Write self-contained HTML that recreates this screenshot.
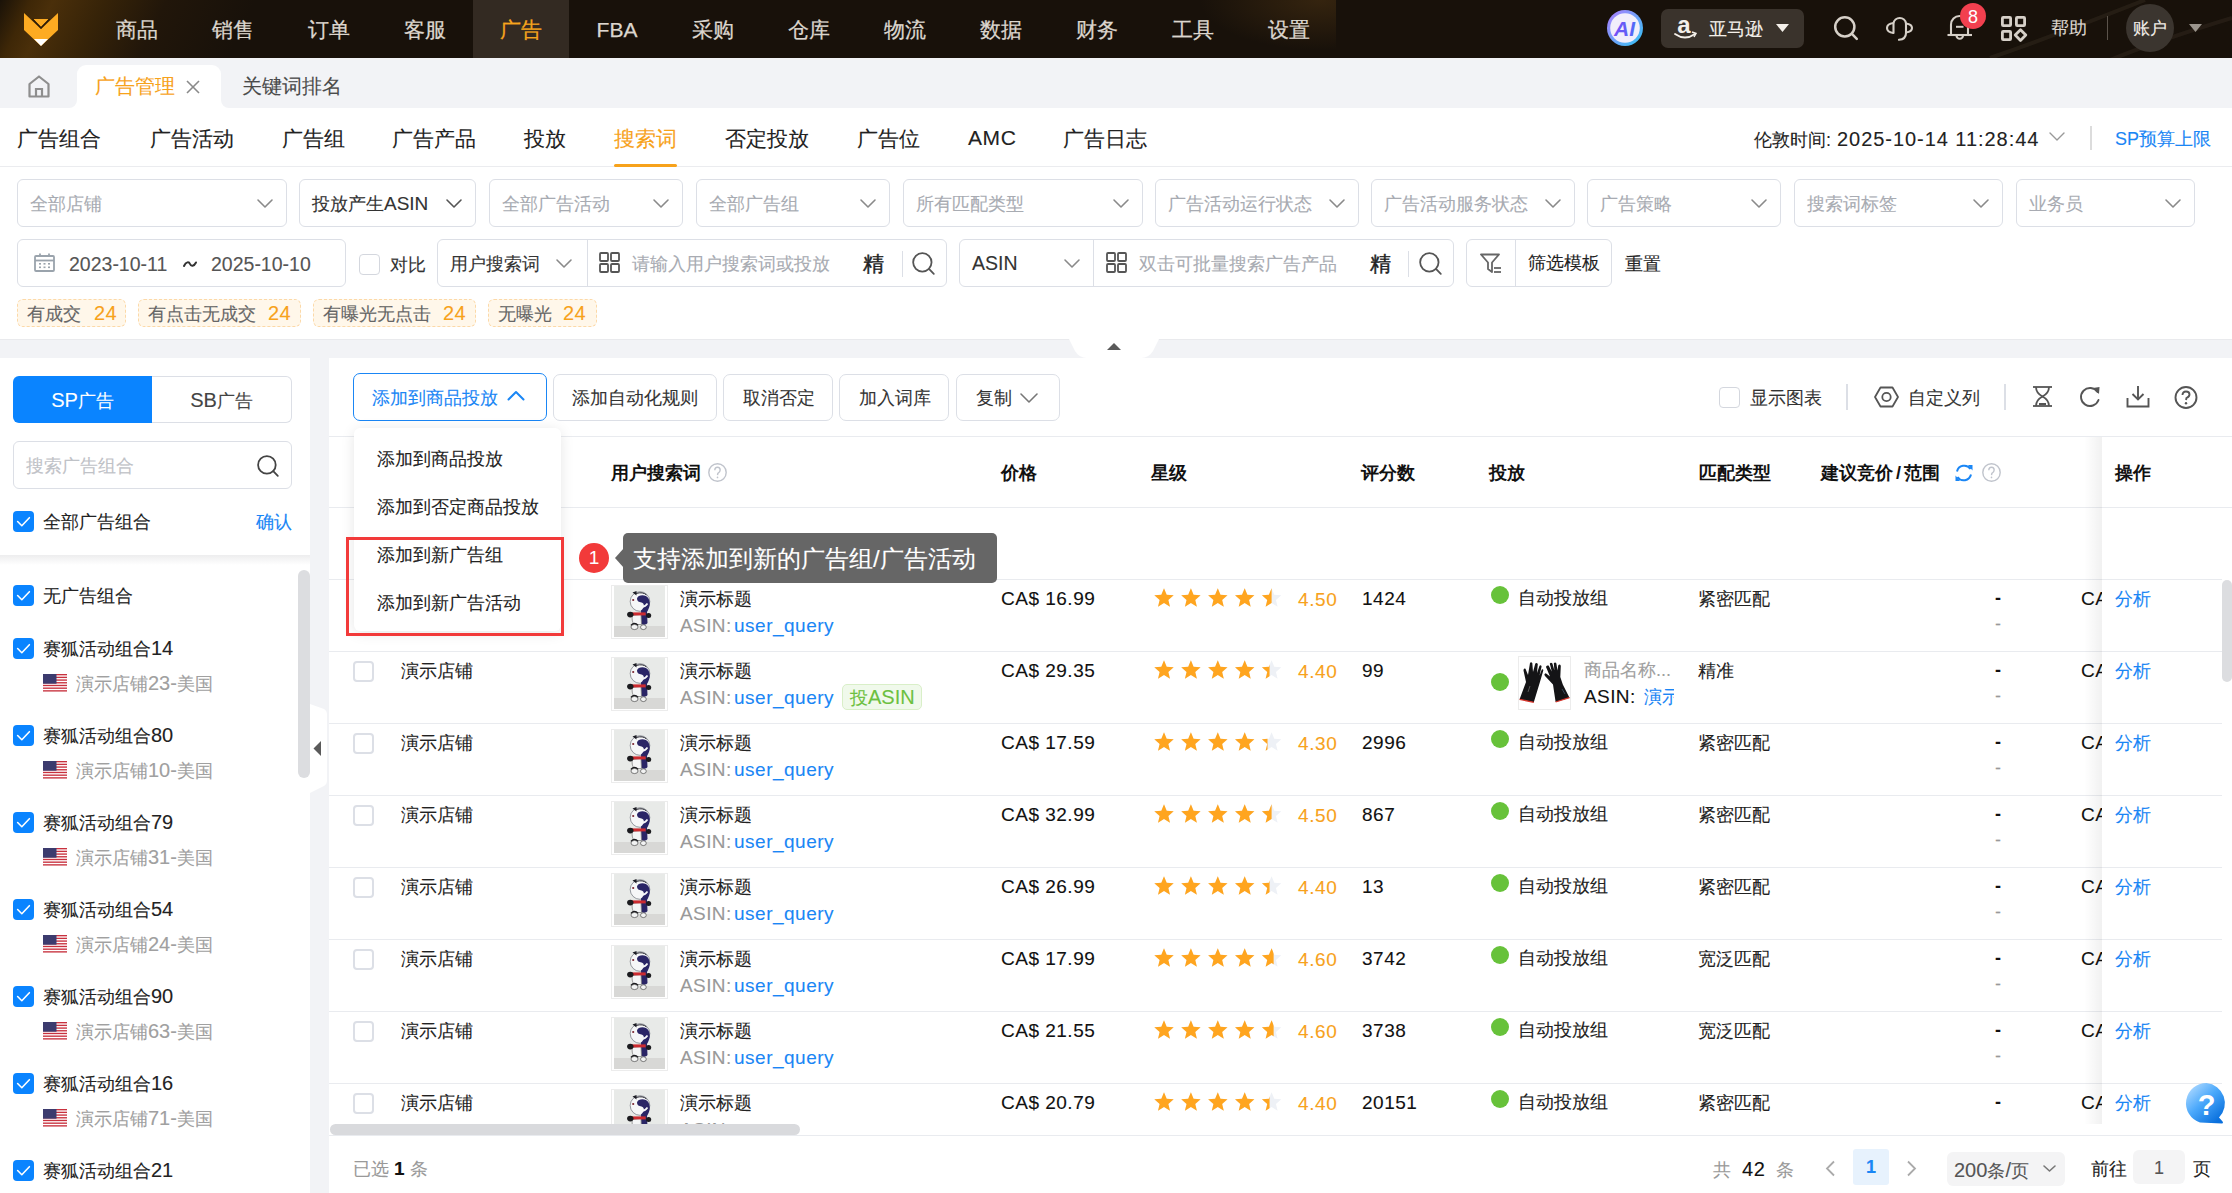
<!DOCTYPE html><html><head><meta charset="utf-8"><style>
html,body{margin:0;padding:0}
body{width:2232px;height:1193px;overflow:hidden;position:relative;background:#fff;font-family:"Liberation Sans",sans-serif;}
.t{position:absolute;white-space:nowrap;-webkit-text-stroke:0.1px currentColor}
.b{position:absolute;box-sizing:content-box}
svg.b{overflow:visible}
</style></head><body>
<div class="b" style="left:0;top:0;width:2232px;height:58px;background:#18110a"></div>
<div class="b" style="left:0;top:0;width:300px;height:58px;background:linear-gradient(116deg,#1a1208 0px,#3e2707 28px,#4a2f0a 48px,#362308 95px,#21160a 150px,#18110a 230px)"></div>
<div class="b" style="left:1150px;top:0;width:186px;height:58px;background:radial-gradient(ellipse 120px 50px at 170px 0px,#35240f 0%,rgba(21,14,8,0) 100%)"></div>
<svg class="b" style="left:1960px;top:0px;overflow:hidden" width="272" height="58" viewBox="0 0 272 58"><path d="M30,58 Q110,30 185,0" fill="none" stroke="rgba(130,115,95,0.13)" stroke-width="4"/><path d="M150,60 Q200,40 272,18" fill="none" stroke="rgba(130,115,95,0.12)" stroke-width="4"/></svg>
<div class="b" style="left:473px;top:0px;width:96px;height:58px;background:#332a22"></div>
<svg class="b" style="left:24px;top:13px;" width="34" height="33" viewBox="0 0 34 33"><polygon points="0,0 17,16 34,0 34,17 17,33 0,17" fill="#fdab22"/><polygon points="9,6 25,6 17,14" fill="#fdab22"/><polyline points="8.5,6 17,15 25.5,6" fill="none" stroke="#2d1c07" stroke-width="1.3"/><polygon points="10,26 24,26 17,33" fill="#fff"/></svg>
<div class="t" style="left:89px;top:18.5px;width:96px;text-align:center;font-size:21px;line-height:21px;color:#dcd6ce;-webkit-text-stroke:0.25px #dcd6ce">商品</div>
<div class="t" style="left:185px;top:18.5px;width:96px;text-align:center;font-size:21px;line-height:21px;color:#dcd6ce;-webkit-text-stroke:0.25px #dcd6ce">销售</div>
<div class="t" style="left:281px;top:18.5px;width:96px;text-align:center;font-size:21px;line-height:21px;color:#dcd6ce;-webkit-text-stroke:0.25px #dcd6ce">订单</div>
<div class="t" style="left:377px;top:18.5px;width:96px;text-align:center;font-size:21px;line-height:21px;color:#dcd6ce;-webkit-text-stroke:0.25px #dcd6ce">客服</div>
<div class="t" style="left:473px;top:18.5px;width:96px;text-align:center;font-size:21px;line-height:21px;color:#f7a51d;-webkit-text-stroke:0.25px #f7a51d">广告</div>
<div class="t" style="left:569px;top:18.5px;width:96px;text-align:center;font-size:21px;line-height:21px;color:#dcd6ce;-webkit-text-stroke:0.25px #dcd6ce">FBA</div>
<div class="t" style="left:665px;top:18.5px;width:96px;text-align:center;font-size:21px;line-height:21px;color:#dcd6ce;-webkit-text-stroke:0.25px #dcd6ce">采购</div>
<div class="t" style="left:761px;top:18.5px;width:96px;text-align:center;font-size:21px;line-height:21px;color:#dcd6ce;-webkit-text-stroke:0.25px #dcd6ce">仓库</div>
<div class="t" style="left:857px;top:18.5px;width:96px;text-align:center;font-size:21px;line-height:21px;color:#dcd6ce;-webkit-text-stroke:0.25px #dcd6ce">物流</div>
<div class="t" style="left:953px;top:18.5px;width:96px;text-align:center;font-size:21px;line-height:21px;color:#dcd6ce;-webkit-text-stroke:0.25px #dcd6ce">数据</div>
<div class="t" style="left:1049px;top:18.5px;width:96px;text-align:center;font-size:21px;line-height:21px;color:#dcd6ce;-webkit-text-stroke:0.25px #dcd6ce">财务</div>
<div class="t" style="left:1145px;top:18.5px;width:96px;text-align:center;font-size:21px;line-height:21px;color:#dcd6ce;-webkit-text-stroke:0.25px #dcd6ce">工具</div>
<div class="t" style="left:1241px;top:18.5px;width:96px;text-align:center;font-size:21px;line-height:21px;color:#dcd6ce;-webkit-text-stroke:0.25px #dcd6ce">设置</div>
<svg class="b" style="left:1607px;top:10px;" width="36" height="36" viewBox="0 0 36 36"><defs><linearGradient id="aig" x1="0" y1="0" x2="1" y2="1"><stop offset="0" stop-color="#b07cff"/><stop offset="1" stop-color="#2fc4f2"/></linearGradient><linearGradient id="ait" x1="0" y1="0" x2="1" y2="0"><stop offset="0" stop-color="#7a4df5"/><stop offset="1" stop-color="#4f6cf7"/></linearGradient></defs><circle cx="18" cy="18" r="18" fill="url(#aig)"/><circle cx="18" cy="18" r="14.8" fill="#f1eefb"/><text x="17.5" y="25.5" text-anchor="middle" font-family="Liberation Sans" font-weight="bold" font-style="italic" font-size="21" fill="url(#ait)">AI</text></svg>
<div class="b" style="left:1661px;top:9px;width:143px;height:39px;background:#3a332c;border-radius:7px"></div>
<svg class="b" style="left:1673px;top:14px;" width="26" height="28" viewBox="0 0 26 28"><text x="11" y="19" text-anchor="middle" font-family="Liberation Sans" font-weight="bold" font-size="24" fill="#f4f0ea">a</text><path d="M2,20 Q12,27 22,20" fill="none" stroke="#f4f0ea" stroke-width="1.8" stroke-linecap="round"/><path d="M19,18 L23,19.5 L21,23" fill="none" stroke="#f4f0ea" stroke-width="1.5"/></svg>
<div class="t" style="left:1709px;top:20px;font-size:18px;line-height:18px;color:#f4f0ea;">亚马逊</div>
<svg class="b" style="left:1776px;top:24px;" width="13" height="9" viewBox="0 0 13 9"><polygon points="0,0 13,0 6.5,8" fill="#f4f0ea"/></svg>
<svg class="b" style="left:1834px;top:16px;" width="24" height="24" viewBox="0 0 24 24"><circle cx="10.8" cy="10.8" r="9.600000000000001" fill="none" stroke="#d6d0c8" stroke-width="2.5"/><line x1="17.712000000000003" y1="17.712000000000003" x2="22.8" y2="22.8" stroke="#d6d0c8" stroke-width="2.5" stroke-linecap="round"/></svg>
<svg class="b" style="left:1886px;top:16px;" width="27" height="25" viewBox="0 0 27 25"><path d="M7.5,17 L7.5,7.5 A6.3,6.3 0 0 1 20,7.5 L20,17 C20,21.5 17,23.5 13,23.8" fill="none" stroke="#d6d0c8" stroke-width="2.1" stroke-linecap="round"/><path d="M7.5,7 C3,7.5 1,9.5 1,12 C1,14.5 3,16.5 7.5,17" fill="none" stroke="#d6d0c8" stroke-width="2.1"/><path d="M20,7.5 C24,8 26,10 26,12 C26,14 24,16 20,16.5" fill="none" stroke="#d6d0c8" stroke-width="2.1"/></svg>
<svg class="b" style="left:1947px;top:16px;" width="26" height="25" viewBox="0 0 26 25"><path d="M4,19 L4,8.5 A8.5,8.5 0 0 1 21,8.5 L21,19" fill="none" stroke="#d6d0c8" stroke-width="2.1"/><line x1="0.5" y1="19" x2="25" y2="19" stroke="#d6d0c8" stroke-width="2.1"/><path d="M9.5,19.5 A3.2,3.2 0 0 0 16,19.5" fill="none" stroke="#d6d0c8" stroke-width="2.1"/><line x1="9" y1="10.8" x2="16.5" y2="10.8" stroke="#d6d0c8" stroke-width="2"/></svg>
<div class="b" style="left:1960px;top:3px;width:26px;height:26px;border-radius:13px;background:#f2404f;color:#fff;font-size:18px;line-height:28px;text-align:center">8</div>
<svg class="b" style="left:2001px;top:16px;" width="26" height="25" viewBox="0 0 26 25"><rect x="1.4" y="1.4" width="8.2" height="8.2" rx="0.8" fill="none" stroke="#d6d0c8" stroke-width="2.8"/><rect x="15.4" y="1.4" width="8.2" height="8.2" rx="0.8" fill="none" stroke="#d6d0c8" stroke-width="2.8"/><rect x="1.4" y="15.4" width="8.2" height="8.2" rx="0.8" fill="none" stroke="#d6d0c8" stroke-width="2.8"/><polygon points="19.5,13.8 24.8,19.1 19.5,24.4 14.2,19.1" fill="none" stroke="#d6d0c8" stroke-width="2.8" stroke-linejoin="round"/></svg>
<div class="t" style="left:2051px;top:19px;font-size:18px;line-height:18px;color:#dcd6ce;">帮助</div>
<div class="b" style="left:2107px;top:16px;width:1px;height:24px;background:#5b534b"></div>
<div class="b" style="left:2126px;top:4px;width:48px;height:48px;border-radius:24px;background:#3b352f"></div>
<div class="t" style="left:2126px;top:20px;width:48px;text-align:center;font-size:16.5px;line-height:17px;color:#f4f0ea">账户</div>
<svg class="b" style="left:2189px;top:24px;" width="13" height="9" viewBox="0 0 13 9"><polygon points="0,0 13,0 6.5,8" fill="#9a948c"/></svg>
<div class="b" style="left:0px;top:58px;width:2232px;height:50px;background:#f2f3f6"></div>
<div class="b" style="left:77px;top:65px;width:144px;height:43px;background:#fff;border-radius:9px 9px 0 0"></div>
<div class="b" style="left:69px;top:100px;width:8px;height:8px;background:#fff"></div>
<div class="b" style="left:69px;top:100px;width:8px;height:8px;background:#f2f3f6;border-radius:0 0 8px 0"></div>
<div class="b" style="left:221px;top:100px;width:8px;height:8px;background:#fff"></div>
<div class="b" style="left:221px;top:100px;width:8px;height:8px;background:#f2f3f6;border-radius:0 0 0 8px"></div>
<svg class="b" style="left:28px;top:75px;" width="22" height="23" viewBox="0 0 22 23"><path d="M1.5,21.5 L1.5,9 L11,1.5 L20.5,9 L20.5,21.5 Z" fill="none" stroke="#8e8e8e" stroke-width="2.2" stroke-linejoin="round"/><path d="M8,21.5 L8,14 L14,14 L14,21.5" fill="none" stroke="#8e8e8e" stroke-width="2.2"/></svg>
<div class="t" style="left:95px;top:77px;font-size:19.5px;line-height:19.5px;color:#f7a21b;">广告管理</div>
<svg class="b" style="left:186px;top:80px;" width="14" height="14" viewBox="0 0 14 14"><line x1="1" y1="1" x2="13" y2="13" stroke="#8a8a8a" stroke-width="1.6"/><line x1="13" y1="1" x2="1" y2="13" stroke="#8a8a8a" stroke-width="1.6"/></svg>
<div class="t" style="left:242px;top:77px;font-size:19.5px;line-height:19.5px;color:#4a4a4a;">关键词排名</div>
<div class="b" style="left:0px;top:166px;width:2232px;height:1px;background:#ebecef"></div>
<div class="t" style="left:17px;top:128px;font-size:21px;line-height:21px;color:#222;">广告组合</div>
<div class="t" style="left:150px;top:128px;font-size:21px;line-height:21px;color:#222;">广告活动</div>
<div class="t" style="left:282px;top:128px;font-size:21px;line-height:21px;color:#222;">广告组</div>
<div class="t" style="left:392px;top:128px;font-size:21px;line-height:21px;color:#222;">广告产品</div>
<div class="t" style="left:524px;top:128px;font-size:21px;line-height:21px;color:#222;">投放</div>
<div class="t" style="left:614px;top:128px;font-size:21px;line-height:21px;color:#f7a21b;">搜索词</div>
<div class="t" style="left:725px;top:128px;font-size:21px;line-height:21px;color:#222;">否定投放</div>
<div class="t" style="left:857px;top:128px;font-size:21px;line-height:21px;color:#222;">广告位</div>
<div class="t" style="left:968px;top:127px;font-size:21px;line-height:21px;color:#222;letter-spacing:0.6px;">AMC</div>
<div class="t" style="left:1063px;top:128px;font-size:21px;line-height:21px;color:#222;">广告日志</div>
<div class="b" style="left:614px;top:164px;width:63px;height:3px;background:#f7a21b;border-radius:2px"></div>
<div class="t" style="left:1754px;top:130px;font-size:18px;line-height:18px;color:#222;">伦敦时间<span style="margin-right:6px">:</span><span style="font-size:20px;letter-spacing:0.95px">2025-10-14 11:28:44</span></div>
<svg class="b" style="left:2049px;top:132px;" width="16" height="10" viewBox="0 0 16 10"><polyline points="1,1 8.0,8 15,1" fill="none" stroke="#999" stroke-width="1.4" stroke-linecap="round" stroke-linejoin="round"/></svg>
<div class="b" style="left:2090px;top:126px;width:2px;height:24px;background:#dcdcdc"></div>
<div class="t" style="left:2115px;top:130px;font-size:18px;line-height:18px;color:#1a86f5;"><span style="font-size:18px;letter-spacing:0px">SP</span>预算上限</div>
<div class="b" style="left:17px;top:179px;width:268px;height:46px;border:1px solid #dcdfe6;border-radius:6px;background:#fff"></div>
<div class="t" style="left:30px;top:195px;font-size:18px;line-height:18px;color:#a8abb2;">全部店铺</div>
<svg class="b" style="left:257px;top:199px;" width="16" height="10" viewBox="0 0 16 10"><polyline points="1,1 8.0,8 15,1" fill="none" stroke="#8a8a8a" stroke-width="1.6" stroke-linecap="round" stroke-linejoin="round"/></svg>
<div class="b" style="left:299px;top:179px;width:175px;height:46px;border:1px solid #dcdfe6;border-radius:6px;background:#fff"></div>
<div class="t" style="left:312px;top:195px;font-size:18px;line-height:18px;color:#333;">投放产生<span style="font-size:19px;letter-spacing:0px">ASIN</span></div>
<svg class="b" style="left:446px;top:199px;" width="16" height="10" viewBox="0 0 16 10"><polyline points="1,1 8.0,8 15,1" fill="none" stroke="#555" stroke-width="1.6" stroke-linecap="round" stroke-linejoin="round"/></svg>
<div class="b" style="left:489px;top:179px;width:192px;height:46px;border:1px solid #dcdfe6;border-radius:6px;background:#fff"></div>
<div class="t" style="left:502px;top:195px;font-size:18px;line-height:18px;color:#a8abb2;">全部广告活动</div>
<svg class="b" style="left:653px;top:199px;" width="16" height="10" viewBox="0 0 16 10"><polyline points="1,1 8.0,8 15,1" fill="none" stroke="#8a8a8a" stroke-width="1.6" stroke-linecap="round" stroke-linejoin="round"/></svg>
<div class="b" style="left:696px;top:179px;width:192px;height:46px;border:1px solid #dcdfe6;border-radius:6px;background:#fff"></div>
<div class="t" style="left:709px;top:195px;font-size:18px;line-height:18px;color:#a8abb2;">全部广告组</div>
<svg class="b" style="left:860px;top:199px;" width="16" height="10" viewBox="0 0 16 10"><polyline points="1,1 8.0,8 15,1" fill="none" stroke="#8a8a8a" stroke-width="1.6" stroke-linecap="round" stroke-linejoin="round"/></svg>
<div class="b" style="left:903px;top:179px;width:238px;height:46px;border:1px solid #dcdfe6;border-radius:6px;background:#fff"></div>
<div class="t" style="left:916px;top:195px;font-size:18px;line-height:18px;color:#a8abb2;">所有匹配类型</div>
<svg class="b" style="left:1113px;top:199px;" width="16" height="10" viewBox="0 0 16 10"><polyline points="1,1 8.0,8 15,1" fill="none" stroke="#8a8a8a" stroke-width="1.6" stroke-linecap="round" stroke-linejoin="round"/></svg>
<div class="b" style="left:1155px;top:179px;width:202px;height:46px;border:1px solid #dcdfe6;border-radius:6px;background:#fff"></div>
<div class="t" style="left:1168px;top:195px;font-size:18px;line-height:18px;color:#a8abb2;">广告活动运行状态</div>
<svg class="b" style="left:1329px;top:199px;" width="16" height="10" viewBox="0 0 16 10"><polyline points="1,1 8.0,8 15,1" fill="none" stroke="#8a8a8a" stroke-width="1.6" stroke-linecap="round" stroke-linejoin="round"/></svg>
<div class="b" style="left:1371px;top:179px;width:202px;height:46px;border:1px solid #dcdfe6;border-radius:6px;background:#fff"></div>
<div class="t" style="left:1384px;top:195px;font-size:18px;line-height:18px;color:#a8abb2;">广告活动服务状态</div>
<svg class="b" style="left:1545px;top:199px;" width="16" height="10" viewBox="0 0 16 10"><polyline points="1,1 8.0,8 15,1" fill="none" stroke="#8a8a8a" stroke-width="1.6" stroke-linecap="round" stroke-linejoin="round"/></svg>
<div class="b" style="left:1587px;top:179px;width:192px;height:46px;border:1px solid #dcdfe6;border-radius:6px;background:#fff"></div>
<div class="t" style="left:1600px;top:195px;font-size:18px;line-height:18px;color:#a8abb2;">广告策略</div>
<svg class="b" style="left:1751px;top:199px;" width="16" height="10" viewBox="0 0 16 10"><polyline points="1,1 8.0,8 15,1" fill="none" stroke="#8a8a8a" stroke-width="1.6" stroke-linecap="round" stroke-linejoin="round"/></svg>
<div class="b" style="left:1794px;top:179px;width:207px;height:46px;border:1px solid #dcdfe6;border-radius:6px;background:#fff"></div>
<div class="t" style="left:1807px;top:195px;font-size:18px;line-height:18px;color:#a8abb2;">搜索词标签</div>
<svg class="b" style="left:1973px;top:199px;" width="16" height="10" viewBox="0 0 16 10"><polyline points="1,1 8.0,8 15,1" fill="none" stroke="#8a8a8a" stroke-width="1.6" stroke-linecap="round" stroke-linejoin="round"/></svg>
<div class="b" style="left:2016px;top:179px;width:177px;height:46px;border:1px solid #dcdfe6;border-radius:6px;background:#fff"></div>
<div class="t" style="left:2029px;top:195px;font-size:18px;line-height:18px;color:#a8abb2;">业务员</div>
<svg class="b" style="left:2165px;top:199px;" width="16" height="10" viewBox="0 0 16 10"><polyline points="1,1 8.0,8 15,1" fill="none" stroke="#8a8a8a" stroke-width="1.6" stroke-linecap="round" stroke-linejoin="round"/></svg>
<div class="b" style="left:17px;top:239px;width:327px;height:46px;border:1px solid #dcdfe6;border-radius:6px"></div>
<svg class="b" style="left:34px;top:253px;" width="21" height="19" viewBox="0 0 21 19"><rect x="1" y="3" width="19" height="15" fill="none" stroke="#9aa3ac" stroke-width="1.8" rx="1"/><line x1="1" y1="7.5" x2="20" y2="7.5" stroke="#9aa3ac" stroke-width="1.8"/><line x1="6" y1="0.5" x2="6" y2="4" stroke="#9aa3ac" stroke-width="1.8"/><line x1="15" y1="0.5" x2="15" y2="4" stroke="#9aa3ac" stroke-width="1.8"/><rect x="5" y="10" width="2" height="1.6" fill="#9aa3ac"/><rect x="9.5" y="10" width="2" height="1.6" fill="#9aa3ac"/><rect x="14" y="10" width="2" height="1.6" fill="#9aa3ac"/><rect x="5" y="13.5" width="2" height="1.6" fill="#9aa3ac"/><rect x="9.5" y="13.5" width="2" height="1.6" fill="#9aa3ac"/><rect x="14" y="13.5" width="2" height="1.6" fill="#9aa3ac"/></svg>
<div class="t" style="left:69px;top:255px;font-size:19.5px;line-height:19.5px;color:#555;letter-spacing:0px;">2023-10-11</div>
<svg class="b" style="left:183px;top:261px;" width="14" height="7" viewBox="0 0 14 7"><path d="M1,5 C3,0.5 6,0.5 7,3 C8,5.5 11,5.5 13,1.5" fill="none" stroke="#333" stroke-width="2" stroke-linecap="round"/></svg>
<div class="t" style="left:211px;top:255px;font-size:19.5px;line-height:19.5px;color:#555;letter-spacing:0px;">2025-10-10</div>
<div class="b" style="left:359px;top:254px;width:19px;height:19px;border:1px solid #d4d7de;border-radius:4px;background:#fff"></div>
<div class="t" style="left:390px;top:256px;font-size:18px;line-height:18px;color:#333;">对比</div>
<div class="b" style="left:437px;top:239px;width:508px;height:46px;border:1px solid #dcdfe6;border-radius:6px"></div>
<div class="b" style="left:587px;top:240px;width:1px;height:46px;background:#dcdfe6"></div>
<div class="t" style="left:450px;top:255px;font-size:18px;line-height:18px;color:#333;">用户搜索词</div>
<svg class="b" style="left:556px;top:259px;" width="16" height="10" viewBox="0 0 16 10"><polyline points="1,1 8.0,8 15,1" fill="none" stroke="#8a8a8a" stroke-width="1.6" stroke-linecap="round" stroke-linejoin="round"/></svg>
<svg class="b" style="left:599px;top:252px;" width="22" height="22" viewBox="0 0 22 22"><rect x="1" y="1" width="8.0" height="8.0" fill="none" stroke="#555" stroke-width="1.8" rx="1"/><rect x="12.0" y="1" width="8.0" height="8.0" fill="none" stroke="#555" stroke-width="1.8" rx="1"/><rect x="1" y="12.0" width="8.0" height="8.0" fill="none" stroke="#555" stroke-width="1.8" rx="1"/><rect x="12.0" y="12.0" width="8.0" height="8.0" fill="none" stroke="#555" stroke-width="1.8" rx="1"/></svg>
<div class="t" style="left:632px;top:255px;font-size:18px;line-height:18px;color:#a8abb2;">请输入用户搜索词或投放</div>
<div class="t" style="left:863px;top:253px;font-size:21px;line-height:21px;color:#222;-webkit-text-stroke:0.4px #222">精</div>
<div class="b" style="left:902px;top:251px;width:1px;height:26px;background:#dcdfe6"></div>
<svg class="b" style="left:912px;top:252px;" width="23" height="23" viewBox="0 0 23 23"><circle cx="10.35" cy="10.35" r="9.200000000000001" fill="none" stroke="#555" stroke-width="1.8"/><line x1="16.974" y1="16.974" x2="21.8" y2="21.8" stroke="#555" stroke-width="1.8" stroke-linecap="round"/></svg>
<div class="b" style="left:959px;top:239px;width:493px;height:46px;border:1px solid #dcdfe6;border-radius:6px"></div>
<div class="b" style="left:1093px;top:240px;width:1px;height:46px;background:#dcdfe6"></div>
<div class="t" style="left:972px;top:254px;font-size:19.5px;line-height:19.5px;color:#333;letter-spacing:0px;">ASIN</div>
<svg class="b" style="left:1064px;top:259px;" width="16" height="10" viewBox="0 0 16 10"><polyline points="1,1 8.0,8 15,1" fill="none" stroke="#8a8a8a" stroke-width="1.6" stroke-linecap="round" stroke-linejoin="round"/></svg>
<svg class="b" style="left:1106px;top:252px;" width="22" height="22" viewBox="0 0 22 22"><rect x="1" y="1" width="8.0" height="8.0" fill="none" stroke="#555" stroke-width="1.8" rx="1"/><rect x="12.0" y="1" width="8.0" height="8.0" fill="none" stroke="#555" stroke-width="1.8" rx="1"/><rect x="1" y="12.0" width="8.0" height="8.0" fill="none" stroke="#555" stroke-width="1.8" rx="1"/><rect x="12.0" y="12.0" width="8.0" height="8.0" fill="none" stroke="#555" stroke-width="1.8" rx="1"/></svg>
<div class="t" style="left:1139px;top:255px;font-size:18px;line-height:18px;color:#a8abb2;">双击可批量搜索广告产品</div>
<div class="t" style="left:1370px;top:253px;font-size:21px;line-height:21px;color:#222;-webkit-text-stroke:0.4px #222">精</div>
<div class="b" style="left:1408px;top:251px;width:1px;height:26px;background:#dcdfe6"></div>
<svg class="b" style="left:1419px;top:252px;" width="23" height="23" viewBox="0 0 23 23"><circle cx="10.35" cy="10.35" r="9.200000000000001" fill="none" stroke="#555" stroke-width="1.8"/><line x1="16.974" y1="16.974" x2="21.8" y2="21.8" stroke="#555" stroke-width="1.8" stroke-linecap="round"/></svg>
<div class="b" style="left:1466px;top:239px;width:144px;height:46px;border:1px solid #dcdfe6;border-radius:6px"></div>
<div class="b" style="left:1515px;top:240px;width:1px;height:46px;background:#dcdfe6"></div>
<svg class="b" style="left:1480px;top:253px;" width="22" height="21" viewBox="0 0 22 21"><path d="M1,1.5 L19,1.5 L12,9.5 L12,19 L8,16 L8,9.5 Z" fill="none" stroke="#666" stroke-width="1.8" stroke-linejoin="round"/><line x1="14" y1="15" x2="21" y2="15" stroke="#666" stroke-width="1.8"/><line x1="14" y1="19" x2="21" y2="19" stroke="#666" stroke-width="1.8"/></svg>
<div class="t" style="left:1528px;top:254px;font-size:18px;line-height:18px;color:#222;">筛选模板</div>
<div class="t" style="left:1625px;top:255px;font-size:18px;line-height:18px;color:#222;">重置</div>
<div class="b" style="left:17px;top:299px;width:107px;height:26px;background:#fff7ea;border:1px dashed #fcd9a8;border-radius:6px"></div>
<div class="t" style="left:27px;top:305px;font-size:18px;line-height:18px;color:#666;">有成交</div>
<div class="t" style="left:94px;top:303px;font-size:20px;line-height:20px;color:#f7a21b;letter-spacing:0.5px;">24</div>
<div class="b" style="left:138px;top:299px;width:161px;height:26px;background:#fff7ea;border:1px dashed #fcd9a8;border-radius:6px"></div>
<div class="t" style="left:148px;top:305px;font-size:18px;line-height:18px;color:#666;">有点击无成交</div>
<div class="t" style="left:268px;top:303px;font-size:20px;line-height:20px;color:#f7a21b;letter-spacing:0.5px;">24</div>
<div class="b" style="left:313px;top:299px;width:161px;height:26px;background:#fff7ea;border:1px dashed #fcd9a8;border-radius:6px"></div>
<div class="t" style="left:323px;top:305px;font-size:18px;line-height:18px;color:#666;">有曝光无点击</div>
<div class="t" style="left:443px;top:303px;font-size:20px;line-height:20px;color:#f7a21b;letter-spacing:0.5px;">24</div>
<div class="b" style="left:488px;top:299px;width:107px;height:26px;background:#fff7ea;border:1px dashed #fcd9a8;border-radius:6px"></div>
<div class="t" style="left:498px;top:305px;font-size:18px;line-height:18px;color:#666;">无曝光</div>
<div class="t" style="left:563px;top:303px;font-size:20px;line-height:20px;color:#f7a21b;letter-spacing:0.5px;">24</div>
<div class="b" style="left:0px;top:339px;width:2232px;height:19px;background:#f2f3f6"></div>
<div class="b" style="left:0px;top:339px;width:2232px;height:1px;background:#e9eaed"></div>
<svg class="b" style="left:1069px;top:339px;" width="90" height="19" viewBox="0 0 90 19"><path d="M0,0 L90,0 L84,12 Q80,19 72,19 L18,19 Q10,19 6,12 Z" fill="#fff"/><polygon points="38,11 52,11 45,4" fill="#5a5a5a"/></svg>
<div class="b" style="left:310px;top:358px;width:19px;height:835px;background:#f2f3f6"></div>
<div class="b" style="left:13px;top:376px;width:139px;height:47px;background:#0a84ff;border-radius:6px 0 0 6px"></div>
<div class="b" style="left:152px;top:376px;width:139px;height:45px;border:1px solid #dcdfe6;border-left:none;border-radius:0 6px 6px 0"></div>
<div class="t" style="left:13px;top:391px;width:139px;text-align:center;font-size:18px;line-height:18px;color:#fff"><span style="font-size:20px;letter-spacing:0px">SP</span>广告</div>
<div class="t" style="left:152px;top:391px;width:139px;text-align:center;font-size:18px;line-height:18px;color:#444"><span style="font-size:20px;letter-spacing:0px">SB</span>广告</div>
<div class="b" style="left:13px;top:441px;width:277px;height:46px;border:1px solid #dcdfe6;border-radius:6px"></div>
<div class="t" style="left:26px;top:457px;font-size:18px;line-height:18px;color:#bfc2c7;">搜索广告组合</div>
<svg class="b" style="left:257px;top:455px;" width="22" height="22" viewBox="0 0 22 22"><circle cx="9.9" cy="9.9" r="8.8" fill="none" stroke="#444" stroke-width="1.8"/><line x1="16.236" y1="16.236" x2="20.8" y2="20.8" stroke="#444" stroke-width="1.8" stroke-linecap="round"/></svg>
<div class="b" style="left:13px;top:511px;width:21px;height:21px;background:#0a84ff;border-radius:4px"></div>
<svg class="b" style="left:13px;top:511px;" width="21" height="21" viewBox="0 0 21 21"><polyline points="4.62,10.5 8.82,14.7 16.38,6.72" fill="none" stroke="#fff" stroke-width="1.6" stroke-linecap="round" stroke-linejoin="round"/></svg>
<div class="t" style="left:43px;top:513px;font-size:18px;line-height:18px;color:#222;">全部广告组合</div>
<div class="t" style="left:256px;top:513px;font-size:18px;line-height:18px;color:#1a86f5;">确认</div>
<div class="b" style="left:0;top:555px;width:310px;height:10px;background:linear-gradient(#ededee,rgba(255,255,255,0))"></div>
<div class="b" style="left:298px;top:570px;width:12px;height:208px;background:#dcdde0;border-radius:6px"></div>
<div class="b" style="left:13px;top:585px;width:21px;height:21px;background:#0a84ff;border-radius:4px"></div>
<svg class="b" style="left:13px;top:585px;" width="21" height="21" viewBox="0 0 21 21"><polyline points="4.62,10.5 8.82,14.7 16.38,6.72" fill="none" stroke="#fff" stroke-width="1.6" stroke-linecap="round" stroke-linejoin="round"/></svg>
<div class="t" style="left:43px;top:587px;font-size:18px;line-height:18px;color:#222;">无广告组合</div>
<div class="b" style="left:13px;top:638px;width:21px;height:21px;background:#0a84ff;border-radius:4px"></div>
<svg class="b" style="left:13px;top:638px;" width="21" height="21" viewBox="0 0 21 21"><polyline points="4.62,10.5 8.82,14.7 16.38,6.72" fill="none" stroke="#fff" stroke-width="1.6" stroke-linecap="round" stroke-linejoin="round"/></svg>
<div class="t" style="left:43px;top:639px;font-size:18px;line-height:18px;color:#222;">赛狐活动组合<span style="font-size:20px;letter-spacing:0px">14</span></div>
<svg class="b" style="left:43px;top:674px;" width="24" height="18" viewBox="0 0 24 18"><rect width="24" height="18" fill="#fff"/><rect x="0" y="0.0" width="24" height="1.35" fill="#c8313e"/><rect x="0" y="2.7" width="24" height="1.35" fill="#c8313e"/><rect x="0" y="5.4" width="24" height="1.35" fill="#c8313e"/><rect x="0" y="8.100000000000001" width="24" height="1.35" fill="#c8313e"/><rect x="0" y="10.8" width="24" height="1.35" fill="#c8313e"/><rect x="0" y="13.5" width="24" height="1.35" fill="#c8313e"/><rect x="0" y="16.200000000000003" width="24" height="1.35" fill="#c8313e"/><rect width="13.5" height="9.7" fill="#3c3b6e"/></svg>
<div class="t" style="left:76px;top:674px;font-size:18px;line-height:18px;color:#a0a0a0;">演示店铺<span style="font-size:20px;letter-spacing:0px">23-</span>美国</div>
<div class="b" style="left:13px;top:725px;width:21px;height:21px;background:#0a84ff;border-radius:4px"></div>
<svg class="b" style="left:13px;top:725px;" width="21" height="21" viewBox="0 0 21 21"><polyline points="4.62,10.5 8.82,14.7 16.38,6.72" fill="none" stroke="#fff" stroke-width="1.6" stroke-linecap="round" stroke-linejoin="round"/></svg>
<div class="t" style="left:43px;top:726px;font-size:18px;line-height:18px;color:#222;">赛狐活动组合<span style="font-size:20px;letter-spacing:0px">80</span></div>
<svg class="b" style="left:43px;top:761px;" width="24" height="18" viewBox="0 0 24 18"><rect width="24" height="18" fill="#fff"/><rect x="0" y="0.0" width="24" height="1.35" fill="#c8313e"/><rect x="0" y="2.7" width="24" height="1.35" fill="#c8313e"/><rect x="0" y="5.4" width="24" height="1.35" fill="#c8313e"/><rect x="0" y="8.100000000000001" width="24" height="1.35" fill="#c8313e"/><rect x="0" y="10.8" width="24" height="1.35" fill="#c8313e"/><rect x="0" y="13.5" width="24" height="1.35" fill="#c8313e"/><rect x="0" y="16.200000000000003" width="24" height="1.35" fill="#c8313e"/><rect width="13.5" height="9.7" fill="#3c3b6e"/></svg>
<div class="t" style="left:76px;top:761px;font-size:18px;line-height:18px;color:#a0a0a0;">演示店铺<span style="font-size:20px;letter-spacing:0px">10-</span>美国</div>
<div class="b" style="left:13px;top:812px;width:21px;height:21px;background:#0a84ff;border-radius:4px"></div>
<svg class="b" style="left:13px;top:812px;" width="21" height="21" viewBox="0 0 21 21"><polyline points="4.62,10.5 8.82,14.7 16.38,6.72" fill="none" stroke="#fff" stroke-width="1.6" stroke-linecap="round" stroke-linejoin="round"/></svg>
<div class="t" style="left:43px;top:813px;font-size:18px;line-height:18px;color:#222;">赛狐活动组合<span style="font-size:20px;letter-spacing:0px">79</span></div>
<svg class="b" style="left:43px;top:848px;" width="24" height="18" viewBox="0 0 24 18"><rect width="24" height="18" fill="#fff"/><rect x="0" y="0.0" width="24" height="1.35" fill="#c8313e"/><rect x="0" y="2.7" width="24" height="1.35" fill="#c8313e"/><rect x="0" y="5.4" width="24" height="1.35" fill="#c8313e"/><rect x="0" y="8.100000000000001" width="24" height="1.35" fill="#c8313e"/><rect x="0" y="10.8" width="24" height="1.35" fill="#c8313e"/><rect x="0" y="13.5" width="24" height="1.35" fill="#c8313e"/><rect x="0" y="16.200000000000003" width="24" height="1.35" fill="#c8313e"/><rect width="13.5" height="9.7" fill="#3c3b6e"/></svg>
<div class="t" style="left:76px;top:848px;font-size:18px;line-height:18px;color:#a0a0a0;">演示店铺<span style="font-size:20px;letter-spacing:0px">31-</span>美国</div>
<div class="b" style="left:13px;top:899px;width:21px;height:21px;background:#0a84ff;border-radius:4px"></div>
<svg class="b" style="left:13px;top:899px;" width="21" height="21" viewBox="0 0 21 21"><polyline points="4.62,10.5 8.82,14.7 16.38,6.72" fill="none" stroke="#fff" stroke-width="1.6" stroke-linecap="round" stroke-linejoin="round"/></svg>
<div class="t" style="left:43px;top:900px;font-size:18px;line-height:18px;color:#222;">赛狐活动组合<span style="font-size:20px;letter-spacing:0px">54</span></div>
<svg class="b" style="left:43px;top:935px;" width="24" height="18" viewBox="0 0 24 18"><rect width="24" height="18" fill="#fff"/><rect x="0" y="0.0" width="24" height="1.35" fill="#c8313e"/><rect x="0" y="2.7" width="24" height="1.35" fill="#c8313e"/><rect x="0" y="5.4" width="24" height="1.35" fill="#c8313e"/><rect x="0" y="8.100000000000001" width="24" height="1.35" fill="#c8313e"/><rect x="0" y="10.8" width="24" height="1.35" fill="#c8313e"/><rect x="0" y="13.5" width="24" height="1.35" fill="#c8313e"/><rect x="0" y="16.200000000000003" width="24" height="1.35" fill="#c8313e"/><rect width="13.5" height="9.7" fill="#3c3b6e"/></svg>
<div class="t" style="left:76px;top:935px;font-size:18px;line-height:18px;color:#a0a0a0;">演示店铺<span style="font-size:20px;letter-spacing:0px">24-</span>美国</div>
<div class="b" style="left:13px;top:986px;width:21px;height:21px;background:#0a84ff;border-radius:4px"></div>
<svg class="b" style="left:13px;top:986px;" width="21" height="21" viewBox="0 0 21 21"><polyline points="4.62,10.5 8.82,14.7 16.38,6.72" fill="none" stroke="#fff" stroke-width="1.6" stroke-linecap="round" stroke-linejoin="round"/></svg>
<div class="t" style="left:43px;top:987px;font-size:18px;line-height:18px;color:#222;">赛狐活动组合<span style="font-size:20px;letter-spacing:0px">90</span></div>
<svg class="b" style="left:43px;top:1022px;" width="24" height="18" viewBox="0 0 24 18"><rect width="24" height="18" fill="#fff"/><rect x="0" y="0.0" width="24" height="1.35" fill="#c8313e"/><rect x="0" y="2.7" width="24" height="1.35" fill="#c8313e"/><rect x="0" y="5.4" width="24" height="1.35" fill="#c8313e"/><rect x="0" y="8.100000000000001" width="24" height="1.35" fill="#c8313e"/><rect x="0" y="10.8" width="24" height="1.35" fill="#c8313e"/><rect x="0" y="13.5" width="24" height="1.35" fill="#c8313e"/><rect x="0" y="16.200000000000003" width="24" height="1.35" fill="#c8313e"/><rect width="13.5" height="9.7" fill="#3c3b6e"/></svg>
<div class="t" style="left:76px;top:1022px;font-size:18px;line-height:18px;color:#a0a0a0;">演示店铺<span style="font-size:20px;letter-spacing:0px">63-</span>美国</div>
<div class="b" style="left:13px;top:1073px;width:21px;height:21px;background:#0a84ff;border-radius:4px"></div>
<svg class="b" style="left:13px;top:1073px;" width="21" height="21" viewBox="0 0 21 21"><polyline points="4.62,10.5 8.82,14.7 16.38,6.72" fill="none" stroke="#fff" stroke-width="1.6" stroke-linecap="round" stroke-linejoin="round"/></svg>
<div class="t" style="left:43px;top:1074px;font-size:18px;line-height:18px;color:#222;">赛狐活动组合<span style="font-size:20px;letter-spacing:0px">16</span></div>
<svg class="b" style="left:43px;top:1109px;" width="24" height="18" viewBox="0 0 24 18"><rect width="24" height="18" fill="#fff"/><rect x="0" y="0.0" width="24" height="1.35" fill="#c8313e"/><rect x="0" y="2.7" width="24" height="1.35" fill="#c8313e"/><rect x="0" y="5.4" width="24" height="1.35" fill="#c8313e"/><rect x="0" y="8.100000000000001" width="24" height="1.35" fill="#c8313e"/><rect x="0" y="10.8" width="24" height="1.35" fill="#c8313e"/><rect x="0" y="13.5" width="24" height="1.35" fill="#c8313e"/><rect x="0" y="16.200000000000003" width="24" height="1.35" fill="#c8313e"/><rect width="13.5" height="9.7" fill="#3c3b6e"/></svg>
<div class="t" style="left:76px;top:1109px;font-size:18px;line-height:18px;color:#a0a0a0;">演示店铺<span style="font-size:20px;letter-spacing:0px">71-</span>美国</div>
<div class="b" style="left:13px;top:1160px;width:21px;height:21px;background:#0a84ff;border-radius:4px"></div>
<svg class="b" style="left:13px;top:1160px;" width="21" height="21" viewBox="0 0 21 21"><polyline points="4.62,10.5 8.82,14.7 16.38,6.72" fill="none" stroke="#fff" stroke-width="1.6" stroke-linecap="round" stroke-linejoin="round"/></svg>
<div class="t" style="left:43px;top:1161px;font-size:18px;line-height:18px;color:#222;">赛狐活动组合<span style="font-size:20px;letter-spacing:0px">21</span></div>
<svg class="b" style="left:310px;top:704px;" width="19" height="90" viewBox="0 0 19 90"><path d="M0,0 L14,5 Q17,6.5 17,11 L17,76 Q17,80.5 14,82 L0,89 Z" fill="#fff"/><polygon points="3.5,44.5 11,37 11,52" fill="#5a5a5a"/></svg>
<div class="b" style="left:353px;top:373px;width:192px;height:46px;border:1.5px solid #1a86f5;border-radius:7px"></div>
<div class="t" style="left:372px;top:389px;font-size:18px;line-height:18px;color:#1a86f5;">添加到商品投放</div>
<svg class="b" style="left:507px;top:390px;" width="18" height="11" viewBox="0 0 18 11"><polyline points="1.5,9.5 9,2 16.5,9.5" fill="none" stroke="#1a86f5" stroke-width="2" stroke-linecap="round" stroke-linejoin="round"/></svg>
<div class="b" style="left:553px;top:374px;width:162px;height:45px;border:1px solid #dcdfe6;border-radius:7px"></div>
<div class="t" style="left:572px;top:389px;font-size:18px;line-height:18px;color:#333;">添加自动化规则</div>
<div class="b" style="left:723px;top:374px;width:108px;height:45px;border:1px solid #dcdfe6;border-radius:7px"></div>
<div class="t" style="left:743px;top:389px;font-size:18px;line-height:18px;color:#333;">取消否定</div>
<div class="b" style="left:839px;top:374px;width:108px;height:45px;border:1px solid #dcdfe6;border-radius:7px"></div>
<div class="t" style="left:859px;top:389px;font-size:18px;line-height:18px;color:#333;">加入词库</div>
<div class="b" style="left:956px;top:374px;width:102px;height:45px;border:1px solid #dcdfe6;border-radius:7px"></div>
<div class="t" style="left:976px;top:389px;font-size:18px;line-height:18px;color:#333;">复制</div>
<svg class="b" style="left:1020px;top:393px;" width="18" height="11" viewBox="0 0 18 11"><polyline points="1,1 9.0,9 17,1" fill="none" stroke="#777" stroke-width="1.6" stroke-linecap="round" stroke-linejoin="round"/></svg>
<div class="b" style="left:1719px;top:387px;width:19px;height:19px;border:1px solid #d4d7de;border-radius:4px;background:#fff"></div>
<div class="t" style="left:1750px;top:389px;font-size:18px;line-height:18px;color:#333;">显示图表</div>
<div class="b" style="left:1846px;top:384px;width:2px;height:26px;background:#dcdfe6"></div>
<svg class="b" style="left:1874px;top:386px;" width="25" height="22" viewBox="0 0 25 22"><polygon points="6.5,1.5 18.5,1.5 24,11 18.5,20.5 6.5,20.5 1,11" fill="none" stroke="#555" stroke-width="1.8" stroke-linejoin="round"/><circle cx="12.5" cy="11" r="4.2" fill="none" stroke="#555" stroke-width="1.8"/></svg>
<div class="t" style="left:1908px;top:389px;font-size:18px;line-height:18px;color:#333;">自定义列</div>
<div class="b" style="left:2004px;top:384px;width:2px;height:26px;background:#dcdfe6"></div>
<svg class="b" style="left:2032px;top:386px;" width="21" height="21" viewBox="0 0 21 21"><line x1="1" y1="1" x2="20" y2="1" stroke="#555" stroke-width="1.8"/><line x1="1" y1="20" x2="20" y2="20" stroke="#555" stroke-width="1.8"/><path d="M4,1 Q4,7 10.5,10.5 Q17,7 17,1" fill="none" stroke="#555" stroke-width="1.8"/><path d="M4,20 Q4,14 10.5,10.5 Q17,14 17,20" fill="none" stroke="#555" stroke-width="1.8"/><rect x="7" y="17" width="7" height="2" fill="#555"/></svg>
<svg class="b" style="left:2079px;top:386px;" width="22" height="22" viewBox="0 0 22 22"><path d="M18.5,6 A9,9 0 1 0 19.5,14" fill="none" stroke="#555" stroke-width="1.9" stroke-linecap="round"/><polygon points="14,2 20.5,1 20,8" fill="#555"/></svg>
<svg class="b" style="left:2126px;top:385px;" width="24" height="23" viewBox="0 0 24 23"><line x1="12" y1="1" x2="12" y2="14" stroke="#555" stroke-width="1.9"/><polyline points="6.5,9 12,14.5 17.5,9" fill="none" stroke="#555" stroke-width="1.9"/><polyline points="1.5,13 1.5,21.5 22.5,21.5 22.5,13" fill="none" stroke="#555" stroke-width="1.9"/></svg>
<svg class="b" style="left:2174px;top:386px;" width="24" height="23" viewBox="0 0 24 23"><circle cx="12" cy="11.5" r="10.5" fill="none" stroke="#555" stroke-width="1.9"/><path d="M8.5,9 Q8.5,5.5 12,5.5 Q15.5,5.5 15.5,8.5 Q15.5,10.5 12.5,12 L12,14" fill="none" stroke="#555" stroke-width="1.9"/><circle cx="12" cy="17.3" r="1.2" fill="#555"/></svg>
<div class="b" style="left:329px;top:436px;width:1903px;height:1px;background:#e9ebef"></div>
<div class="b" style="left:329px;top:507px;width:1903px;height:1px;background:#e9ebef"></div>
<div class="b" style="left:329px;top:579px;width:1893px;height:1px;background:#e9ebef"></div>
<div class="b" style="left:329px;top:651px;width:1893px;height:1px;background:#e9ebef"></div>
<div class="b" style="left:329px;top:723px;width:1893px;height:1px;background:#e9ebef"></div>
<div class="b" style="left:329px;top:795px;width:1893px;height:1px;background:#e9ebef"></div>
<div class="b" style="left:329px;top:867px;width:1893px;height:1px;background:#e9ebef"></div>
<div class="b" style="left:329px;top:939px;width:1893px;height:1px;background:#e9ebef"></div>
<div class="b" style="left:329px;top:1011px;width:1893px;height:1px;background:#e9ebef"></div>
<div class="b" style="left:329px;top:1083px;width:1893px;height:1px;background:#e9ebef"></div>
<div class="b" style="left:329px;top:1135px;width:1903px;height:1px;background:#e9ebef"></div>
<div class="t" style="left:611px;top:464px;font-size:18px;line-height:18px;color:#111;font-weight:bold;-webkit-text-stroke:0;">用户搜索词</div>
<svg class="b" style="left:708px;top:463px;" width="19" height="19" viewBox="0 0 19 19"><circle cx="9.5" cy="9.5" r="8.7" fill="none" stroke="#c0c4cc" stroke-width="1.4"/><path d="M6.84,7.22 Q6.84,4.18 9.5,4.18 Q12.16,4.18 12.16,7.03 Q12.16,9.12 9.88,10.260000000000002 L9.5,12.16" fill="none" stroke="#c0c4cc" stroke-width="1.4"/><circle cx="9.5" cy="14.44" r="0.84" fill="#c0c4cc"/></svg>
<div class="t" style="left:1001px;top:464px;font-size:18px;line-height:18px;color:#111;font-weight:bold;-webkit-text-stroke:0;">价格</div>
<div class="t" style="left:1151px;top:464px;font-size:18px;line-height:18px;color:#111;font-weight:bold;-webkit-text-stroke:0;">星级</div>
<div class="t" style="left:1361px;top:464px;font-size:18px;line-height:18px;color:#111;font-weight:bold;-webkit-text-stroke:0;">评分数</div>
<div class="t" style="left:1489px;top:464px;font-size:18px;line-height:18px;color:#111;font-weight:bold;-webkit-text-stroke:0;">投放</div>
<div class="t" style="left:1699px;top:464px;font-size:18px;line-height:18px;color:#111;font-weight:bold;-webkit-text-stroke:0;">匹配类型</div>
<div class="t" style="left:1821px;top:464px;font-size:18px;line-height:18px;color:#111;font-weight:bold;-webkit-text-stroke:0;">建议竞价<span style="margin:0 3px">/</span>范围</div>
<svg class="b" style="left:1954px;top:463px;" width="20" height="20" viewBox="0 0 20 20"><path d="M3,8.5 A7.5,7.5 0 0 1 16.5,6" fill="none" stroke="#1a86f5" stroke-width="2"/><polygon points="14,2 18.5,2 18.5,7.5" fill="#1a86f5"/><path d="M17,11.5 A7.5,7.5 0 0 1 3.5,14" fill="none" stroke="#1a86f5" stroke-width="2"/><polygon points="6,18 1.5,18 1.5,12.5" fill="#1a86f5"/></svg>
<svg class="b" style="left:1982px;top:463px;" width="19" height="19" viewBox="0 0 19 19"><circle cx="9.5" cy="9.5" r="8.7" fill="none" stroke="#c0c4cc" stroke-width="1.4"/><path d="M6.84,7.22 Q6.84,4.18 9.5,4.18 Q12.16,4.18 12.16,7.03 Q12.16,9.12 9.88,10.260000000000002 L9.5,12.16" fill="none" stroke="#c0c4cc" stroke-width="1.4"/><circle cx="9.5" cy="14.44" r="0.84" fill="#c0c4cc"/></svg>
<div class="b" style="left:329px;top:579px;width:1893px;height:545px;overflow:hidden">
<div class="b" style="left:282px;top:6px;width:55px;height:52px;border:1px solid #ececec;background:#fff"></div>
<svg class="b" style="left:285px;top:7px;" width="51" height="51" viewBox="0 0 51 51"><use href="#panda"/></svg>
<div class="t" style="left:351px;top:11px;font-size:18px;line-height:18px;color:#222;">演示标题</div>
<div class="t" style="left:351px;top:37px;font-size:19px;line-height:19px;color:#999;letter-spacing:0.4px;">ASIN:</div>
<div class="t" style="left:405px;top:37px;font-size:19px;line-height:19px;color:#1a86f5;letter-spacing:0.5px;">user_query</div>
<div class="t" style="left:672px;top:10px;font-size:19px;line-height:19px;color:#111;letter-spacing:0.5px;">CA$ 16.99</div>
<svg class="b" style="left:821px;top:9px;" width="140" height="22" viewBox="0 0 140 22"><polygon points="14.00,0.30 16.70,6.79 23.70,7.35 18.37,11.92 20.00,18.75 14.00,15.09 8.00,18.75 9.63,11.92 4.30,7.35 11.30,6.79" fill="#eef1f6"/><polygon points="40.90,0.30 43.60,6.79 50.60,7.35 45.27,11.92 46.90,18.75 40.90,15.09 34.90,18.75 36.53,11.92 31.20,7.35 38.20,6.79" fill="#eef1f6"/><polygon points="67.80,0.30 70.50,6.79 77.50,7.35 72.17,11.92 73.80,18.75 67.80,15.09 61.80,18.75 63.43,11.92 58.10,7.35 65.10,6.79" fill="#eef1f6"/><polygon points="94.70,0.30 97.40,6.79 104.40,7.35 99.07,11.92 100.70,18.75 94.70,15.09 88.70,18.75 90.33,11.92 85.00,7.35 92.00,6.79" fill="#eef1f6"/><polygon points="121.60,0.30 124.30,6.79 131.30,7.35 125.97,11.92 127.60,18.75 121.60,15.09 115.60,18.75 117.23,11.92 111.90,7.35 118.90,6.79" fill="#eef1f6"/><polygon points="14.00,0.30 16.70,6.79 23.70,7.35 18.37,11.92 20.00,18.75 14.00,15.09 8.00,18.75 9.63,11.92 4.30,7.35 11.30,6.79" fill="#ffa51f"/><polygon points="40.90,0.30 43.60,6.79 50.60,7.35 45.27,11.92 46.90,18.75 40.90,15.09 34.90,18.75 36.53,11.92 31.20,7.35 38.20,6.79" fill="#ffa51f"/><polygon points="67.80,0.30 70.50,6.79 77.50,7.35 72.17,11.92 73.80,18.75 67.80,15.09 61.80,18.75 63.43,11.92 58.10,7.35 65.10,6.79" fill="#ffa51f"/><polygon points="94.70,0.30 97.40,6.79 104.40,7.35 99.07,11.92 100.70,18.75 94.70,15.09 88.70,18.75 90.33,11.92 85.00,7.35 92.00,6.79" fill="#ffa51f"/><clipPath id="c0"><rect x="0" y="0" width="121.60" height="22"/></clipPath><polygon clip-path="url(#c0)" points="121.60,0.30 124.30,6.79 131.30,7.35 125.97,11.92 127.60,18.75 121.60,15.09 115.60,18.75 117.23,11.92 111.90,7.35 118.90,6.79" fill="#ffa51f"/></svg>
<div class="t" style="left:969px;top:11px;font-size:19px;line-height:19px;color:#f7a21b;letter-spacing:0.6px;">4.50</div>
<div class="t" style="left:1033px;top:10px;font-size:19px;line-height:19px;color:#111;letter-spacing:0.5px;">1424</div>
<div class="b" style="left:1162px;top:7px;width:18px;height:18px;background:#67c23a;border-radius:9px"></div>
<div class="t" style="left:1189px;top:10px;font-size:18px;line-height:18px;color:#222;">自动投放组</div>
<div class="t" style="left:1369px;top:11px;font-size:18px;line-height:18px;color:#222;">紧密匹配</div>
<div class="t" style="left:1666px;top:10px;font-size:18px;line-height:18px;color:#111;font-weight:bold;-webkit-text-stroke:0;">-</div>
<div class="t" style="left:1666px;top:36px;font-size:18px;line-height:18px;color:#999;">-</div>
<div class="t" style="left:1752px;top:10px;font-size:19px;line-height:19px;color:#111;letter-spacing:0.5px;">CA</div>
<div class="b" style="left:24px;top:82px"></div>
<div class="b" style="left:24px;top:82px;width:17px;height:17px;border:2px solid #dcdfe6;border-radius:4px;background:#fff"></div>
<div class="t" style="left:72px;top:83px;font-size:18px;line-height:18px;color:#222;">演示店铺</div>
<div class="b" style="left:282px;top:78px;width:55px;height:52px;border:1px solid #ececec;background:#fff"></div>
<svg class="b" style="left:285px;top:79px;" width="51" height="51" viewBox="0 0 51 51"><use href="#panda"/></svg>
<div class="t" style="left:351px;top:83px;font-size:18px;line-height:18px;color:#222;">演示标题</div>
<div class="t" style="left:351px;top:109px;font-size:19px;line-height:19px;color:#999;letter-spacing:0.4px;">ASIN:</div>
<div class="t" style="left:405px;top:109px;font-size:19px;line-height:19px;color:#1a86f5;letter-spacing:0.5px;">user_query</div>
<div class="b" style="left:513px;top:105px;width:78px;height:24px;background:#f0f9eb;border:1px solid #d9efc8;border-radius:5px"></div>
<div class="t" style="left:521px;top:109px;font-size:18px;line-height:18px;color:#6cc03f;">投<span style="font-size:20px;letter-spacing:0px">ASIN</span></div>
<div class="t" style="left:672px;top:82px;font-size:19px;line-height:19px;color:#111;letter-spacing:0.5px;">CA$ 29.35</div>
<svg class="b" style="left:821px;top:81px;" width="140" height="22" viewBox="0 0 140 22"><polygon points="14.00,0.30 16.70,6.79 23.70,7.35 18.37,11.92 20.00,18.75 14.00,15.09 8.00,18.75 9.63,11.92 4.30,7.35 11.30,6.79" fill="#eef1f6"/><polygon points="40.90,0.30 43.60,6.79 50.60,7.35 45.27,11.92 46.90,18.75 40.90,15.09 34.90,18.75 36.53,11.92 31.20,7.35 38.20,6.79" fill="#eef1f6"/><polygon points="67.80,0.30 70.50,6.79 77.50,7.35 72.17,11.92 73.80,18.75 67.80,15.09 61.80,18.75 63.43,11.92 58.10,7.35 65.10,6.79" fill="#eef1f6"/><polygon points="94.70,0.30 97.40,6.79 104.40,7.35 99.07,11.92 100.70,18.75 94.70,15.09 88.70,18.75 90.33,11.92 85.00,7.35 92.00,6.79" fill="#eef1f6"/><polygon points="121.60,0.30 124.30,6.79 131.30,7.35 125.97,11.92 127.60,18.75 121.60,15.09 115.60,18.75 117.23,11.92 111.90,7.35 118.90,6.79" fill="#eef1f6"/><polygon points="14.00,0.30 16.70,6.79 23.70,7.35 18.37,11.92 20.00,18.75 14.00,15.09 8.00,18.75 9.63,11.92 4.30,7.35 11.30,6.79" fill="#ffa51f"/><polygon points="40.90,0.30 43.60,6.79 50.60,7.35 45.27,11.92 46.90,18.75 40.90,15.09 34.90,18.75 36.53,11.92 31.20,7.35 38.20,6.79" fill="#ffa51f"/><polygon points="67.80,0.30 70.50,6.79 77.50,7.35 72.17,11.92 73.80,18.75 67.80,15.09 61.80,18.75 63.43,11.92 58.10,7.35 65.10,6.79" fill="#ffa51f"/><polygon points="94.70,0.30 97.40,6.79 104.40,7.35 99.07,11.92 100.70,18.75 94.70,15.09 88.70,18.75 90.33,11.92 85.00,7.35 92.00,6.79" fill="#ffa51f"/><clipPath id="c1"><rect x="0" y="0" width="119.56" height="22"/></clipPath><polygon clip-path="url(#c1)" points="121.60,0.30 124.30,6.79 131.30,7.35 125.97,11.92 127.60,18.75 121.60,15.09 115.60,18.75 117.23,11.92 111.90,7.35 118.90,6.79" fill="#ffa51f"/></svg>
<div class="t" style="left:969px;top:83px;font-size:19px;line-height:19px;color:#f7a21b;letter-spacing:0.6px;">4.40</div>
<div class="t" style="left:1033px;top:82px;font-size:19px;line-height:19px;color:#111;letter-spacing:0.5px;">99</div>
<div class="b" style="left:1162px;top:94px;width:18px;height:18px;background:#67c23a;border-radius:9px"></div>
<div class="b" style="left:1189px;top:77px;width:51px;height:52px;border:1px solid #ececec;background:#fff"></div>
<svg class="b" style="left:1189px;top:77px;" width="52" height="53" viewBox="0 0 52 53"><use href="#glove"/></svg>
<div class="t" style="left:1255px;top:82px;font-size:18px;line-height:18px;color:#a0a0a0;">商品名称...</div>
<div class="t" style="left:1255px;top:108px;font-size:19px;line-height:19px;color:#111;letter-spacing:0.4px;">ASIN:</div>
<div class="t" style="left:1315px;top:109px;font-size:18px;line-height:18px;color:#1a86f5;width:30px;overflow:hidden">演示</div>
<div class="t" style="left:1369px;top:83px;font-size:18px;line-height:18px;color:#222;">精准</div>
<div class="t" style="left:1666px;top:82px;font-size:18px;line-height:18px;color:#111;font-weight:bold;-webkit-text-stroke:0;">-</div>
<div class="t" style="left:1666px;top:108px;font-size:18px;line-height:18px;color:#999;">-</div>
<div class="t" style="left:1752px;top:82px;font-size:19px;line-height:19px;color:#111;letter-spacing:0.5px;">CA</div>
<div class="b" style="left:24px;top:154px"></div>
<div class="b" style="left:24px;top:154px;width:17px;height:17px;border:2px solid #dcdfe6;border-radius:4px;background:#fff"></div>
<div class="t" style="left:72px;top:155px;font-size:18px;line-height:18px;color:#222;">演示店铺</div>
<div class="b" style="left:282px;top:150px;width:55px;height:52px;border:1px solid #ececec;background:#fff"></div>
<svg class="b" style="left:285px;top:151px;" width="51" height="51" viewBox="0 0 51 51"><use href="#panda"/></svg>
<div class="t" style="left:351px;top:155px;font-size:18px;line-height:18px;color:#222;">演示标题</div>
<div class="t" style="left:351px;top:181px;font-size:19px;line-height:19px;color:#999;letter-spacing:0.4px;">ASIN:</div>
<div class="t" style="left:405px;top:181px;font-size:19px;line-height:19px;color:#1a86f5;letter-spacing:0.5px;">user_query</div>
<div class="t" style="left:672px;top:154px;font-size:19px;line-height:19px;color:#111;letter-spacing:0.5px;">CA$ 17.59</div>
<svg class="b" style="left:821px;top:153px;" width="140" height="22" viewBox="0 0 140 22"><polygon points="14.00,0.30 16.70,6.79 23.70,7.35 18.37,11.92 20.00,18.75 14.00,15.09 8.00,18.75 9.63,11.92 4.30,7.35 11.30,6.79" fill="#eef1f6"/><polygon points="40.90,0.30 43.60,6.79 50.60,7.35 45.27,11.92 46.90,18.75 40.90,15.09 34.90,18.75 36.53,11.92 31.20,7.35 38.20,6.79" fill="#eef1f6"/><polygon points="67.80,0.30 70.50,6.79 77.50,7.35 72.17,11.92 73.80,18.75 67.80,15.09 61.80,18.75 63.43,11.92 58.10,7.35 65.10,6.79" fill="#eef1f6"/><polygon points="94.70,0.30 97.40,6.79 104.40,7.35 99.07,11.92 100.70,18.75 94.70,15.09 88.70,18.75 90.33,11.92 85.00,7.35 92.00,6.79" fill="#eef1f6"/><polygon points="121.60,0.30 124.30,6.79 131.30,7.35 125.97,11.92 127.60,18.75 121.60,15.09 115.60,18.75 117.23,11.92 111.90,7.35 118.90,6.79" fill="#eef1f6"/><polygon points="14.00,0.30 16.70,6.79 23.70,7.35 18.37,11.92 20.00,18.75 14.00,15.09 8.00,18.75 9.63,11.92 4.30,7.35 11.30,6.79" fill="#ffa51f"/><polygon points="40.90,0.30 43.60,6.79 50.60,7.35 45.27,11.92 46.90,18.75 40.90,15.09 34.90,18.75 36.53,11.92 31.20,7.35 38.20,6.79" fill="#ffa51f"/><polygon points="67.80,0.30 70.50,6.79 77.50,7.35 72.17,11.92 73.80,18.75 67.80,15.09 61.80,18.75 63.43,11.92 58.10,7.35 65.10,6.79" fill="#ffa51f"/><polygon points="94.70,0.30 97.40,6.79 104.40,7.35 99.07,11.92 100.70,18.75 94.70,15.09 88.70,18.75 90.33,11.92 85.00,7.35 92.00,6.79" fill="#ffa51f"/><clipPath id="c2"><rect x="0" y="0" width="117.52" height="22"/></clipPath><polygon clip-path="url(#c2)" points="121.60,0.30 124.30,6.79 131.30,7.35 125.97,11.92 127.60,18.75 121.60,15.09 115.60,18.75 117.23,11.92 111.90,7.35 118.90,6.79" fill="#ffa51f"/></svg>
<div class="t" style="left:969px;top:155px;font-size:19px;line-height:19px;color:#f7a21b;letter-spacing:0.6px;">4.30</div>
<div class="t" style="left:1033px;top:154px;font-size:19px;line-height:19px;color:#111;letter-spacing:0.5px;">2996</div>
<div class="b" style="left:1162px;top:151px;width:18px;height:18px;background:#67c23a;border-radius:9px"></div>
<div class="t" style="left:1189px;top:154px;font-size:18px;line-height:18px;color:#222;">自动投放组</div>
<div class="t" style="left:1369px;top:155px;font-size:18px;line-height:18px;color:#222;">紧密匹配</div>
<div class="t" style="left:1666px;top:154px;font-size:18px;line-height:18px;color:#111;font-weight:bold;-webkit-text-stroke:0;">-</div>
<div class="t" style="left:1666px;top:180px;font-size:18px;line-height:18px;color:#999;">-</div>
<div class="t" style="left:1752px;top:154px;font-size:19px;line-height:19px;color:#111;letter-spacing:0.5px;">CA</div>
<div class="b" style="left:24px;top:226px"></div>
<div class="b" style="left:24px;top:226px;width:17px;height:17px;border:2px solid #dcdfe6;border-radius:4px;background:#fff"></div>
<div class="t" style="left:72px;top:227px;font-size:18px;line-height:18px;color:#222;">演示店铺</div>
<div class="b" style="left:282px;top:222px;width:55px;height:52px;border:1px solid #ececec;background:#fff"></div>
<svg class="b" style="left:285px;top:223px;" width="51" height="51" viewBox="0 0 51 51"><use href="#panda"/></svg>
<div class="t" style="left:351px;top:227px;font-size:18px;line-height:18px;color:#222;">演示标题</div>
<div class="t" style="left:351px;top:253px;font-size:19px;line-height:19px;color:#999;letter-spacing:0.4px;">ASIN:</div>
<div class="t" style="left:405px;top:253px;font-size:19px;line-height:19px;color:#1a86f5;letter-spacing:0.5px;">user_query</div>
<div class="t" style="left:672px;top:226px;font-size:19px;line-height:19px;color:#111;letter-spacing:0.5px;">CA$ 32.99</div>
<svg class="b" style="left:821px;top:225px;" width="140" height="22" viewBox="0 0 140 22"><polygon points="14.00,0.30 16.70,6.79 23.70,7.35 18.37,11.92 20.00,18.75 14.00,15.09 8.00,18.75 9.63,11.92 4.30,7.35 11.30,6.79" fill="#eef1f6"/><polygon points="40.90,0.30 43.60,6.79 50.60,7.35 45.27,11.92 46.90,18.75 40.90,15.09 34.90,18.75 36.53,11.92 31.20,7.35 38.20,6.79" fill="#eef1f6"/><polygon points="67.80,0.30 70.50,6.79 77.50,7.35 72.17,11.92 73.80,18.75 67.80,15.09 61.80,18.75 63.43,11.92 58.10,7.35 65.10,6.79" fill="#eef1f6"/><polygon points="94.70,0.30 97.40,6.79 104.40,7.35 99.07,11.92 100.70,18.75 94.70,15.09 88.70,18.75 90.33,11.92 85.00,7.35 92.00,6.79" fill="#eef1f6"/><polygon points="121.60,0.30 124.30,6.79 131.30,7.35 125.97,11.92 127.60,18.75 121.60,15.09 115.60,18.75 117.23,11.92 111.90,7.35 118.90,6.79" fill="#eef1f6"/><polygon points="14.00,0.30 16.70,6.79 23.70,7.35 18.37,11.92 20.00,18.75 14.00,15.09 8.00,18.75 9.63,11.92 4.30,7.35 11.30,6.79" fill="#ffa51f"/><polygon points="40.90,0.30 43.60,6.79 50.60,7.35 45.27,11.92 46.90,18.75 40.90,15.09 34.90,18.75 36.53,11.92 31.20,7.35 38.20,6.79" fill="#ffa51f"/><polygon points="67.80,0.30 70.50,6.79 77.50,7.35 72.17,11.92 73.80,18.75 67.80,15.09 61.80,18.75 63.43,11.92 58.10,7.35 65.10,6.79" fill="#ffa51f"/><polygon points="94.70,0.30 97.40,6.79 104.40,7.35 99.07,11.92 100.70,18.75 94.70,15.09 88.70,18.75 90.33,11.92 85.00,7.35 92.00,6.79" fill="#ffa51f"/><clipPath id="c3"><rect x="0" y="0" width="121.60" height="22"/></clipPath><polygon clip-path="url(#c3)" points="121.60,0.30 124.30,6.79 131.30,7.35 125.97,11.92 127.60,18.75 121.60,15.09 115.60,18.75 117.23,11.92 111.90,7.35 118.90,6.79" fill="#ffa51f"/></svg>
<div class="t" style="left:969px;top:227px;font-size:19px;line-height:19px;color:#f7a21b;letter-spacing:0.6px;">4.50</div>
<div class="t" style="left:1033px;top:226px;font-size:19px;line-height:19px;color:#111;letter-spacing:0.5px;">867</div>
<div class="b" style="left:1162px;top:223px;width:18px;height:18px;background:#67c23a;border-radius:9px"></div>
<div class="t" style="left:1189px;top:226px;font-size:18px;line-height:18px;color:#222;">自动投放组</div>
<div class="t" style="left:1369px;top:227px;font-size:18px;line-height:18px;color:#222;">紧密匹配</div>
<div class="t" style="left:1666px;top:226px;font-size:18px;line-height:18px;color:#111;font-weight:bold;-webkit-text-stroke:0;">-</div>
<div class="t" style="left:1666px;top:252px;font-size:18px;line-height:18px;color:#999;">-</div>
<div class="t" style="left:1752px;top:226px;font-size:19px;line-height:19px;color:#111;letter-spacing:0.5px;">CA</div>
<div class="b" style="left:24px;top:298px"></div>
<div class="b" style="left:24px;top:298px;width:17px;height:17px;border:2px solid #dcdfe6;border-radius:4px;background:#fff"></div>
<div class="t" style="left:72px;top:299px;font-size:18px;line-height:18px;color:#222;">演示店铺</div>
<div class="b" style="left:282px;top:294px;width:55px;height:52px;border:1px solid #ececec;background:#fff"></div>
<svg class="b" style="left:285px;top:295px;" width="51" height="51" viewBox="0 0 51 51"><use href="#panda"/></svg>
<div class="t" style="left:351px;top:299px;font-size:18px;line-height:18px;color:#222;">演示标题</div>
<div class="t" style="left:351px;top:325px;font-size:19px;line-height:19px;color:#999;letter-spacing:0.4px;">ASIN:</div>
<div class="t" style="left:405px;top:325px;font-size:19px;line-height:19px;color:#1a86f5;letter-spacing:0.5px;">user_query</div>
<div class="t" style="left:672px;top:298px;font-size:19px;line-height:19px;color:#111;letter-spacing:0.5px;">CA$ 26.99</div>
<svg class="b" style="left:821px;top:297px;" width="140" height="22" viewBox="0 0 140 22"><polygon points="14.00,0.30 16.70,6.79 23.70,7.35 18.37,11.92 20.00,18.75 14.00,15.09 8.00,18.75 9.63,11.92 4.30,7.35 11.30,6.79" fill="#eef1f6"/><polygon points="40.90,0.30 43.60,6.79 50.60,7.35 45.27,11.92 46.90,18.75 40.90,15.09 34.90,18.75 36.53,11.92 31.20,7.35 38.20,6.79" fill="#eef1f6"/><polygon points="67.80,0.30 70.50,6.79 77.50,7.35 72.17,11.92 73.80,18.75 67.80,15.09 61.80,18.75 63.43,11.92 58.10,7.35 65.10,6.79" fill="#eef1f6"/><polygon points="94.70,0.30 97.40,6.79 104.40,7.35 99.07,11.92 100.70,18.75 94.70,15.09 88.70,18.75 90.33,11.92 85.00,7.35 92.00,6.79" fill="#eef1f6"/><polygon points="121.60,0.30 124.30,6.79 131.30,7.35 125.97,11.92 127.60,18.75 121.60,15.09 115.60,18.75 117.23,11.92 111.90,7.35 118.90,6.79" fill="#eef1f6"/><polygon points="14.00,0.30 16.70,6.79 23.70,7.35 18.37,11.92 20.00,18.75 14.00,15.09 8.00,18.75 9.63,11.92 4.30,7.35 11.30,6.79" fill="#ffa51f"/><polygon points="40.90,0.30 43.60,6.79 50.60,7.35 45.27,11.92 46.90,18.75 40.90,15.09 34.90,18.75 36.53,11.92 31.20,7.35 38.20,6.79" fill="#ffa51f"/><polygon points="67.80,0.30 70.50,6.79 77.50,7.35 72.17,11.92 73.80,18.75 67.80,15.09 61.80,18.75 63.43,11.92 58.10,7.35 65.10,6.79" fill="#ffa51f"/><polygon points="94.70,0.30 97.40,6.79 104.40,7.35 99.07,11.92 100.70,18.75 94.70,15.09 88.70,18.75 90.33,11.92 85.00,7.35 92.00,6.79" fill="#ffa51f"/><clipPath id="c4"><rect x="0" y="0" width="119.56" height="22"/></clipPath><polygon clip-path="url(#c4)" points="121.60,0.30 124.30,6.79 131.30,7.35 125.97,11.92 127.60,18.75 121.60,15.09 115.60,18.75 117.23,11.92 111.90,7.35 118.90,6.79" fill="#ffa51f"/></svg>
<div class="t" style="left:969px;top:299px;font-size:19px;line-height:19px;color:#f7a21b;letter-spacing:0.6px;">4.40</div>
<div class="t" style="left:1033px;top:298px;font-size:19px;line-height:19px;color:#111;letter-spacing:0.5px;">13</div>
<div class="b" style="left:1162px;top:295px;width:18px;height:18px;background:#67c23a;border-radius:9px"></div>
<div class="t" style="left:1189px;top:298px;font-size:18px;line-height:18px;color:#222;">自动投放组</div>
<div class="t" style="left:1369px;top:299px;font-size:18px;line-height:18px;color:#222;">紧密匹配</div>
<div class="t" style="left:1666px;top:298px;font-size:18px;line-height:18px;color:#111;font-weight:bold;-webkit-text-stroke:0;">-</div>
<div class="t" style="left:1666px;top:324px;font-size:18px;line-height:18px;color:#999;">-</div>
<div class="t" style="left:1752px;top:298px;font-size:19px;line-height:19px;color:#111;letter-spacing:0.5px;">CA</div>
<div class="b" style="left:24px;top:370px"></div>
<div class="b" style="left:24px;top:370px;width:17px;height:17px;border:2px solid #dcdfe6;border-radius:4px;background:#fff"></div>
<div class="t" style="left:72px;top:371px;font-size:18px;line-height:18px;color:#222;">演示店铺</div>
<div class="b" style="left:282px;top:366px;width:55px;height:52px;border:1px solid #ececec;background:#fff"></div>
<svg class="b" style="left:285px;top:367px;" width="51" height="51" viewBox="0 0 51 51"><use href="#panda"/></svg>
<div class="t" style="left:351px;top:371px;font-size:18px;line-height:18px;color:#222;">演示标题</div>
<div class="t" style="left:351px;top:397px;font-size:19px;line-height:19px;color:#999;letter-spacing:0.4px;">ASIN:</div>
<div class="t" style="left:405px;top:397px;font-size:19px;line-height:19px;color:#1a86f5;letter-spacing:0.5px;">user_query</div>
<div class="t" style="left:672px;top:370px;font-size:19px;line-height:19px;color:#111;letter-spacing:0.5px;">CA$ 17.99</div>
<svg class="b" style="left:821px;top:369px;" width="140" height="22" viewBox="0 0 140 22"><polygon points="14.00,0.30 16.70,6.79 23.70,7.35 18.37,11.92 20.00,18.75 14.00,15.09 8.00,18.75 9.63,11.92 4.30,7.35 11.30,6.79" fill="#eef1f6"/><polygon points="40.90,0.30 43.60,6.79 50.60,7.35 45.27,11.92 46.90,18.75 40.90,15.09 34.90,18.75 36.53,11.92 31.20,7.35 38.20,6.79" fill="#eef1f6"/><polygon points="67.80,0.30 70.50,6.79 77.50,7.35 72.17,11.92 73.80,18.75 67.80,15.09 61.80,18.75 63.43,11.92 58.10,7.35 65.10,6.79" fill="#eef1f6"/><polygon points="94.70,0.30 97.40,6.79 104.40,7.35 99.07,11.92 100.70,18.75 94.70,15.09 88.70,18.75 90.33,11.92 85.00,7.35 92.00,6.79" fill="#eef1f6"/><polygon points="121.60,0.30 124.30,6.79 131.30,7.35 125.97,11.92 127.60,18.75 121.60,15.09 115.60,18.75 117.23,11.92 111.90,7.35 118.90,6.79" fill="#eef1f6"/><polygon points="14.00,0.30 16.70,6.79 23.70,7.35 18.37,11.92 20.00,18.75 14.00,15.09 8.00,18.75 9.63,11.92 4.30,7.35 11.30,6.79" fill="#ffa51f"/><polygon points="40.90,0.30 43.60,6.79 50.60,7.35 45.27,11.92 46.90,18.75 40.90,15.09 34.90,18.75 36.53,11.92 31.20,7.35 38.20,6.79" fill="#ffa51f"/><polygon points="67.80,0.30 70.50,6.79 77.50,7.35 72.17,11.92 73.80,18.75 67.80,15.09 61.80,18.75 63.43,11.92 58.10,7.35 65.10,6.79" fill="#ffa51f"/><polygon points="94.70,0.30 97.40,6.79 104.40,7.35 99.07,11.92 100.70,18.75 94.70,15.09 88.70,18.75 90.33,11.92 85.00,7.35 92.00,6.79" fill="#ffa51f"/><clipPath id="c5"><rect x="0" y="0" width="123.64" height="22"/></clipPath><polygon clip-path="url(#c5)" points="121.60,0.30 124.30,6.79 131.30,7.35 125.97,11.92 127.60,18.75 121.60,15.09 115.60,18.75 117.23,11.92 111.90,7.35 118.90,6.79" fill="#ffa51f"/></svg>
<div class="t" style="left:969px;top:371px;font-size:19px;line-height:19px;color:#f7a21b;letter-spacing:0.6px;">4.60</div>
<div class="t" style="left:1033px;top:370px;font-size:19px;line-height:19px;color:#111;letter-spacing:0.5px;">3742</div>
<div class="b" style="left:1162px;top:367px;width:18px;height:18px;background:#67c23a;border-radius:9px"></div>
<div class="t" style="left:1189px;top:370px;font-size:18px;line-height:18px;color:#222;">自动投放组</div>
<div class="t" style="left:1369px;top:371px;font-size:18px;line-height:18px;color:#222;">宽泛匹配</div>
<div class="t" style="left:1666px;top:370px;font-size:18px;line-height:18px;color:#111;font-weight:bold;-webkit-text-stroke:0;">-</div>
<div class="t" style="left:1666px;top:396px;font-size:18px;line-height:18px;color:#999;">-</div>
<div class="t" style="left:1752px;top:370px;font-size:19px;line-height:19px;color:#111;letter-spacing:0.5px;">CA</div>
<div class="b" style="left:24px;top:442px"></div>
<div class="b" style="left:24px;top:442px;width:17px;height:17px;border:2px solid #dcdfe6;border-radius:4px;background:#fff"></div>
<div class="t" style="left:72px;top:443px;font-size:18px;line-height:18px;color:#222;">演示店铺</div>
<div class="b" style="left:282px;top:438px;width:55px;height:52px;border:1px solid #ececec;background:#fff"></div>
<svg class="b" style="left:285px;top:439px;" width="51" height="51" viewBox="0 0 51 51"><use href="#panda"/></svg>
<div class="t" style="left:351px;top:443px;font-size:18px;line-height:18px;color:#222;">演示标题</div>
<div class="t" style="left:351px;top:469px;font-size:19px;line-height:19px;color:#999;letter-spacing:0.4px;">ASIN:</div>
<div class="t" style="left:405px;top:469px;font-size:19px;line-height:19px;color:#1a86f5;letter-spacing:0.5px;">user_query</div>
<div class="t" style="left:672px;top:442px;font-size:19px;line-height:19px;color:#111;letter-spacing:0.5px;">CA$ 21.55</div>
<svg class="b" style="left:821px;top:441px;" width="140" height="22" viewBox="0 0 140 22"><polygon points="14.00,0.30 16.70,6.79 23.70,7.35 18.37,11.92 20.00,18.75 14.00,15.09 8.00,18.75 9.63,11.92 4.30,7.35 11.30,6.79" fill="#eef1f6"/><polygon points="40.90,0.30 43.60,6.79 50.60,7.35 45.27,11.92 46.90,18.75 40.90,15.09 34.90,18.75 36.53,11.92 31.20,7.35 38.20,6.79" fill="#eef1f6"/><polygon points="67.80,0.30 70.50,6.79 77.50,7.35 72.17,11.92 73.80,18.75 67.80,15.09 61.80,18.75 63.43,11.92 58.10,7.35 65.10,6.79" fill="#eef1f6"/><polygon points="94.70,0.30 97.40,6.79 104.40,7.35 99.07,11.92 100.70,18.75 94.70,15.09 88.70,18.75 90.33,11.92 85.00,7.35 92.00,6.79" fill="#eef1f6"/><polygon points="121.60,0.30 124.30,6.79 131.30,7.35 125.97,11.92 127.60,18.75 121.60,15.09 115.60,18.75 117.23,11.92 111.90,7.35 118.90,6.79" fill="#eef1f6"/><polygon points="14.00,0.30 16.70,6.79 23.70,7.35 18.37,11.92 20.00,18.75 14.00,15.09 8.00,18.75 9.63,11.92 4.30,7.35 11.30,6.79" fill="#ffa51f"/><polygon points="40.90,0.30 43.60,6.79 50.60,7.35 45.27,11.92 46.90,18.75 40.90,15.09 34.90,18.75 36.53,11.92 31.20,7.35 38.20,6.79" fill="#ffa51f"/><polygon points="67.80,0.30 70.50,6.79 77.50,7.35 72.17,11.92 73.80,18.75 67.80,15.09 61.80,18.75 63.43,11.92 58.10,7.35 65.10,6.79" fill="#ffa51f"/><polygon points="94.70,0.30 97.40,6.79 104.40,7.35 99.07,11.92 100.70,18.75 94.70,15.09 88.70,18.75 90.33,11.92 85.00,7.35 92.00,6.79" fill="#ffa51f"/><clipPath id="c6"><rect x="0" y="0" width="123.64" height="22"/></clipPath><polygon clip-path="url(#c6)" points="121.60,0.30 124.30,6.79 131.30,7.35 125.97,11.92 127.60,18.75 121.60,15.09 115.60,18.75 117.23,11.92 111.90,7.35 118.90,6.79" fill="#ffa51f"/></svg>
<div class="t" style="left:969px;top:443px;font-size:19px;line-height:19px;color:#f7a21b;letter-spacing:0.6px;">4.60</div>
<div class="t" style="left:1033px;top:442px;font-size:19px;line-height:19px;color:#111;letter-spacing:0.5px;">3738</div>
<div class="b" style="left:1162px;top:439px;width:18px;height:18px;background:#67c23a;border-radius:9px"></div>
<div class="t" style="left:1189px;top:442px;font-size:18px;line-height:18px;color:#222;">自动投放组</div>
<div class="t" style="left:1369px;top:443px;font-size:18px;line-height:18px;color:#222;">宽泛匹配</div>
<div class="t" style="left:1666px;top:442px;font-size:18px;line-height:18px;color:#111;font-weight:bold;-webkit-text-stroke:0;">-</div>
<div class="t" style="left:1666px;top:468px;font-size:18px;line-height:18px;color:#999;">-</div>
<div class="t" style="left:1752px;top:442px;font-size:19px;line-height:19px;color:#111;letter-spacing:0.5px;">CA</div>
<div class="b" style="left:24px;top:514px"></div>
<div class="b" style="left:24px;top:514px;width:17px;height:17px;border:2px solid #dcdfe6;border-radius:4px;background:#fff"></div>
<div class="t" style="left:72px;top:515px;font-size:18px;line-height:18px;color:#222;">演示店铺</div>
<div class="b" style="left:282px;top:510px;width:55px;height:52px;border:1px solid #ececec;background:#fff"></div>
<svg class="b" style="left:285px;top:511px;" width="51" height="51" viewBox="0 0 51 51"><use href="#panda"/></svg>
<div class="t" style="left:351px;top:515px;font-size:18px;line-height:18px;color:#222;">演示标题</div>
<div class="t" style="left:351px;top:541px;font-size:19px;line-height:19px;color:#999;letter-spacing:0.4px;">ASIN:</div>
<div class="t" style="left:405px;top:541px;font-size:19px;line-height:19px;color:#1a86f5;letter-spacing:0.5px;">user_query</div>
<div class="t" style="left:672px;top:514px;font-size:19px;line-height:19px;color:#111;letter-spacing:0.5px;">CA$ 20.79</div>
<svg class="b" style="left:821px;top:513px;" width="140" height="22" viewBox="0 0 140 22"><polygon points="14.00,0.30 16.70,6.79 23.70,7.35 18.37,11.92 20.00,18.75 14.00,15.09 8.00,18.75 9.63,11.92 4.30,7.35 11.30,6.79" fill="#eef1f6"/><polygon points="40.90,0.30 43.60,6.79 50.60,7.35 45.27,11.92 46.90,18.75 40.90,15.09 34.90,18.75 36.53,11.92 31.20,7.35 38.20,6.79" fill="#eef1f6"/><polygon points="67.80,0.30 70.50,6.79 77.50,7.35 72.17,11.92 73.80,18.75 67.80,15.09 61.80,18.75 63.43,11.92 58.10,7.35 65.10,6.79" fill="#eef1f6"/><polygon points="94.70,0.30 97.40,6.79 104.40,7.35 99.07,11.92 100.70,18.75 94.70,15.09 88.70,18.75 90.33,11.92 85.00,7.35 92.00,6.79" fill="#eef1f6"/><polygon points="121.60,0.30 124.30,6.79 131.30,7.35 125.97,11.92 127.60,18.75 121.60,15.09 115.60,18.75 117.23,11.92 111.90,7.35 118.90,6.79" fill="#eef1f6"/><polygon points="14.00,0.30 16.70,6.79 23.70,7.35 18.37,11.92 20.00,18.75 14.00,15.09 8.00,18.75 9.63,11.92 4.30,7.35 11.30,6.79" fill="#ffa51f"/><polygon points="40.90,0.30 43.60,6.79 50.60,7.35 45.27,11.92 46.90,18.75 40.90,15.09 34.90,18.75 36.53,11.92 31.20,7.35 38.20,6.79" fill="#ffa51f"/><polygon points="67.80,0.30 70.50,6.79 77.50,7.35 72.17,11.92 73.80,18.75 67.80,15.09 61.80,18.75 63.43,11.92 58.10,7.35 65.10,6.79" fill="#ffa51f"/><polygon points="94.70,0.30 97.40,6.79 104.40,7.35 99.07,11.92 100.70,18.75 94.70,15.09 88.70,18.75 90.33,11.92 85.00,7.35 92.00,6.79" fill="#ffa51f"/><clipPath id="c7"><rect x="0" y="0" width="119.56" height="22"/></clipPath><polygon clip-path="url(#c7)" points="121.60,0.30 124.30,6.79 131.30,7.35 125.97,11.92 127.60,18.75 121.60,15.09 115.60,18.75 117.23,11.92 111.90,7.35 118.90,6.79" fill="#ffa51f"/></svg>
<div class="t" style="left:969px;top:515px;font-size:19px;line-height:19px;color:#f7a21b;letter-spacing:0.6px;">4.40</div>
<div class="t" style="left:1033px;top:514px;font-size:19px;line-height:19px;color:#111;letter-spacing:0.5px;">20151</div>
<div class="b" style="left:1162px;top:511px;width:18px;height:18px;background:#67c23a;border-radius:9px"></div>
<div class="t" style="left:1189px;top:514px;font-size:18px;line-height:18px;color:#222;">自动投放组</div>
<div class="t" style="left:1369px;top:515px;font-size:18px;line-height:18px;color:#222;">紧密匹配</div>
<div class="t" style="left:1666px;top:514px;font-size:18px;line-height:18px;color:#111;font-weight:bold;-webkit-text-stroke:0;">-</div>
<div class="t" style="left:1752px;top:514px;font-size:19px;line-height:19px;color:#111;letter-spacing:0.5px;">CA</div>
</div>
<div class="b" style="left:2084px;top:437px;width:18px;height:687px;background:linear-gradient(90deg,rgba(0,0,0,0),rgba(0,0,0,0.055))"></div>
<div class="b" style="left:2102px;top:436px;width:120px;height:688px;background:#fff"></div>
<div class="b" style="left:2102px;top:436px;width:130px;height:1px;background:#e9ebef"></div>
<div class="b" style="left:2102px;top:507px;width:130px;height:1px;background:#e9ebef"></div>
<div class="b" style="left:2102px;top:579px;width:120px;height:1px;background:#e9ebef"></div>
<div class="b" style="left:2102px;top:651px;width:120px;height:1px;background:#e9ebef"></div>
<div class="b" style="left:2102px;top:723px;width:120px;height:1px;background:#e9ebef"></div>
<div class="b" style="left:2102px;top:795px;width:120px;height:1px;background:#e9ebef"></div>
<div class="b" style="left:2102px;top:867px;width:120px;height:1px;background:#e9ebef"></div>
<div class="b" style="left:2102px;top:939px;width:120px;height:1px;background:#e9ebef"></div>
<div class="b" style="left:2102px;top:1011px;width:120px;height:1px;background:#e9ebef"></div>
<div class="b" style="left:2102px;top:1083px;width:120px;height:1px;background:#e9ebef"></div>
<div class="t" style="left:2115px;top:464px;font-size:18px;line-height:18px;color:#111;font-weight:bold;-webkit-text-stroke:0;">操作</div>
<div class="t" style="left:2115px;top:590px;font-size:18px;line-height:18px;color:#1a86f5;">分析</div>
<div class="t" style="left:2115px;top:662px;font-size:18px;line-height:18px;color:#1a86f5;">分析</div>
<div class="t" style="left:2115px;top:734px;font-size:18px;line-height:18px;color:#1a86f5;">分析</div>
<div class="t" style="left:2115px;top:806px;font-size:18px;line-height:18px;color:#1a86f5;">分析</div>
<div class="t" style="left:2115px;top:878px;font-size:18px;line-height:18px;color:#1a86f5;">分析</div>
<div class="t" style="left:2115px;top:950px;font-size:18px;line-height:18px;color:#1a86f5;">分析</div>
<div class="t" style="left:2115px;top:1022px;font-size:18px;line-height:18px;color:#1a86f5;">分析</div>
<div class="t" style="left:2115px;top:1094px;font-size:18px;line-height:18px;color:#1a86f5;">分析</div>
<div class="b" style="left:2222px;top:580px;width:10px;height:102px;background:#dcdde0;border-radius:5px"></div>
<div class="b" style="left:330px;top:1124px;width:470px;height:11px;background:#d9dadd;border-radius:6px"></div>
<div class="t" style="left:353px;top:1160px;font-size:18px;line-height:18px;color:#999;">已选 <span style="color:#111;font-size:19px;font-weight:bold">1</span> 条</div>
<div class="t" style="left:1713px;top:1160px;font-size:18px;line-height:18px;color:#999;word-spacing:6px">共 <span style="color:#111;font-size:20px;letter-spacing:0.5px">42</span> 条</div>
<svg class="b" style="left:1825px;top:1160px;" width="11" height="17" viewBox="0 0 11 17"><polyline points="9,1.5 2,8.5 9,15.5" fill="none" stroke="#aaa" stroke-width="1.8"/></svg>
<div class="b" style="left:1853px;top:1149px;width:36px;height:36px;background:#e7f2fd;border-radius:3px"></div>
<div class="t" style="left:1853px;top:1158px;width:36px;text-align:center;font-size:18px;line-height:18px;color:#1a86f5;font-weight:bold">1</div>
<svg class="b" style="left:1906px;top:1160px;" width="11" height="17" viewBox="0 0 11 17"><polyline points="2,1.5 9,8.5 2,15.5" fill="none" stroke="#aaa" stroke-width="1.8"/></svg>
<div class="b" style="left:1947px;top:1152px;width:118px;height:34px;background:#f4f4f5;border-radius:6px"></div>
<div class="t" style="left:1954px;top:1161px;font-size:18px;line-height:18px;color:#555;"><span style="font-size:20px;letter-spacing:0px">200</span>条<span style="font-size:20px;letter-spacing:0px">/</span>页</div>
<svg class="b" style="left:2043px;top:1165px;" width="13" height="8" viewBox="0 0 13 8"><polyline points="1,1 6.5,6 12,1" fill="none" stroke="#777" stroke-width="1.6" stroke-linecap="round" stroke-linejoin="round"/></svg>
<div class="t" style="left:2091px;top:1160px;font-size:18px;line-height:18px;color:#222;">前往</div>
<div class="b" style="left:2133px;top:1150px;width:52px;height:34px;background:#f4f4f5;border-radius:6px"></div>
<div class="t" style="left:2133px;top:1159px;width:52px;text-align:center;font-size:18px;line-height:18px;color:#555">1</div>
<div class="t" style="left:2193px;top:1160px;font-size:18px;line-height:18px;color:#222;">页</div>
<svg class="b" style="left:2186px;top:1083px;" width="42" height="42" viewBox="0 0 42 42"><defs><linearGradient id="hg" x1="0.15" y1="0.1" x2="0.85" y2="0.9"><stop offset="0" stop-color="#a3d4ff"/><stop offset="0.45" stop-color="#4aa8fb"/><stop offset="1" stop-color="#0a70dd"/></linearGradient></defs><path d="M20.5,0 A20.3,20.3 0 0 0 14,39.6 L36,40.6 Q37.8,40.2 36.6,38.4 L33,34.5 A20.3,20.3 0 0 0 20.5,0 Z" fill="url(#hg)"/><text x="20.5" y="31.5" text-anchor="middle" font-family="Liberation Sans" font-weight="bold" font-size="29" fill="#fff">?</text></svg>
<div class="b" style="left:354px;top:428px;width:207px;height:203px;background:#fff;border-radius:6px;box-shadow:0 2px 14px rgba(0,0,0,0.10)"></div>
<div class="t" style="left:377px;top:450px;font-size:18px;line-height:18px;color:#222;">添加到商品投放</div>
<div class="t" style="left:377px;top:498px;font-size:18px;line-height:18px;color:#222;">添加到否定商品投放</div>
<div class="t" style="left:377px;top:546px;font-size:18px;line-height:18px;color:#222;">添加到新广告组</div>
<div class="t" style="left:377px;top:594px;font-size:18px;line-height:18px;color:#222;">添加到新广告活动</div>
<div class="b" style="left:346px;top:537px;width:212px;height:93px;border:3px solid #f23a3a"></div>
<div class="b" style="left:579px;top:543px;width:30px;height:30px;border-radius:15px;background:#f23a3a;color:#fff;font-size:19px;line-height:30px;text-align:center">1</div>
<svg class="b" style="left:615px;top:548px;" width="9" height="20" viewBox="0 0 9 20"><polygon points="9,0 0,10 9,20" fill="#666"/></svg>
<div class="b" style="left:623px;top:533px;width:374px;height:50px;background:#666;border-radius:5px"></div>
<div class="t" style="left:633px;top:547px;font-size:24px;line-height:24px;color:#fff;">支持添加到新的广告组/广告活动</div>
<svg width="0" height="0" style="position:absolute"><defs>
<linearGradient id="pbg2" x1="0" y1="0" x2="0" y2="1"><stop offset="0" stop-color="#e4e6e4"/><stop offset="0.83" stop-color="#dfe1df"/><stop offset="0.85" stop-color="#d3d3d1"/><stop offset="1" stop-color="#cdcdcb"/></linearGradient><g id="panda"><rect width="51" height="51" fill="#e8eae8"/><rect y="40" width="51" height="11" fill="#d8d8d6"/><ellipse cx="26" cy="15.5" rx="9.8" ry="9.8" fill="#f6f7f8" stroke="#555a66" stroke-width="0.6"/><path d="M18.5,6.5 L22.5,5 L22.5,9.5 Z" fill="#1d1d25"/><path d="M22,7.5 Q29,5.5 32.5,9" fill="none" stroke="#2a2a33" stroke-width="1"/><path d="M23,12.5 C24,8.5 32,8 34.5,12.5 C37,17 35.5,22 33,26 L33.5,37 C32.5,39 29,39 27.5,38 L27,24.5 C30.5,22 31,17.5 27.5,16.5 C25,16 23.2,15.5 23,12.5 Z" fill="#2a2566"/><path d="M19.5,19 C25,22.5 31,21.5 33.5,17.5" fill="none" stroke="#f6f7f8" stroke-width="1.6"/><circle cx="19.2" cy="14" r="1.1" fill="#7a2430"/><path d="M18.5,29.5 C17.5,34 18.5,38 22,38.5 L27.5,38.5 L27,28.5 Z" fill="#f4f5f6" stroke="#444" stroke-width="0.5"/><rect x="17.6" y="26.4" width="14.1" height="3" fill="#cc2b30"/><ellipse cx="16.3" cy="28.6" rx="3.2" ry="2.8" fill="#1b1b1f"/><ellipse cx="34.6" cy="29.4" rx="2.6" ry="2.5" fill="#1b1b1f"/><path d="M17,39.5 Q20.5,35.5 24,39.5" fill="none" stroke="#1b1b1f" stroke-width="1.6"/><ellipse cx="20.5" cy="41" rx="3.5" ry="2.6" fill="#f2f3f3" stroke="#333" stroke-width="0.6"/><ellipse cx="29.4" cy="41.2" rx="2.9" ry="2.4" fill="#f2f3f3" stroke="#333" stroke-width="0.6"/></g>
<g id="glove"><path d="M1.6,43.3 L8,26 L5.5,14.5 Q5.5,12 7.5,12.8 L10,19 L12,7 Q13,5.3 14.3,7 L15,16 L17.3,7.6 Q18.6,6.2 19.8,8 L19,17 L21.5,9.8 Q23,8.6 23.6,10.5 L21.5,19.5 L23.8,13.5 Q25.3,12.5 25.3,14.5 L21.8,26.5 L15.8,46.3 Z" fill="#141416"/><path d="M1.6,43.3 L15.8,46.3" stroke="#d8332a" stroke-width="1.3"/><path d="M37.6,46 L35,28.5 L27,20 Q25.5,17.8 27.8,17.2 L32,20.5 L28,11 Q28.3,8.8 30.6,9.6 L33.8,15.5 L31.8,7.8 Q32.8,6 34.4,7.6 L36.4,14.5 L35.8,7.2 Q37.3,5.6 38.4,7.6 L39.4,14.5 L40.3,9.2 Q41.8,7.6 42.8,9.8 L42.3,21 L44.8,28.5 L51.5,41.7 Z" fill="#141416"/><path d="M37.6,46 L51.5,41.7" stroke="#d8332a" stroke-width="1.3"/><path d="M10,36 L12,30" stroke="#555" stroke-width="1"/><path d="M44,33 L47,38" stroke="#3a4a5a" stroke-width="1"/></g>
</defs></svg>
</body></html>
